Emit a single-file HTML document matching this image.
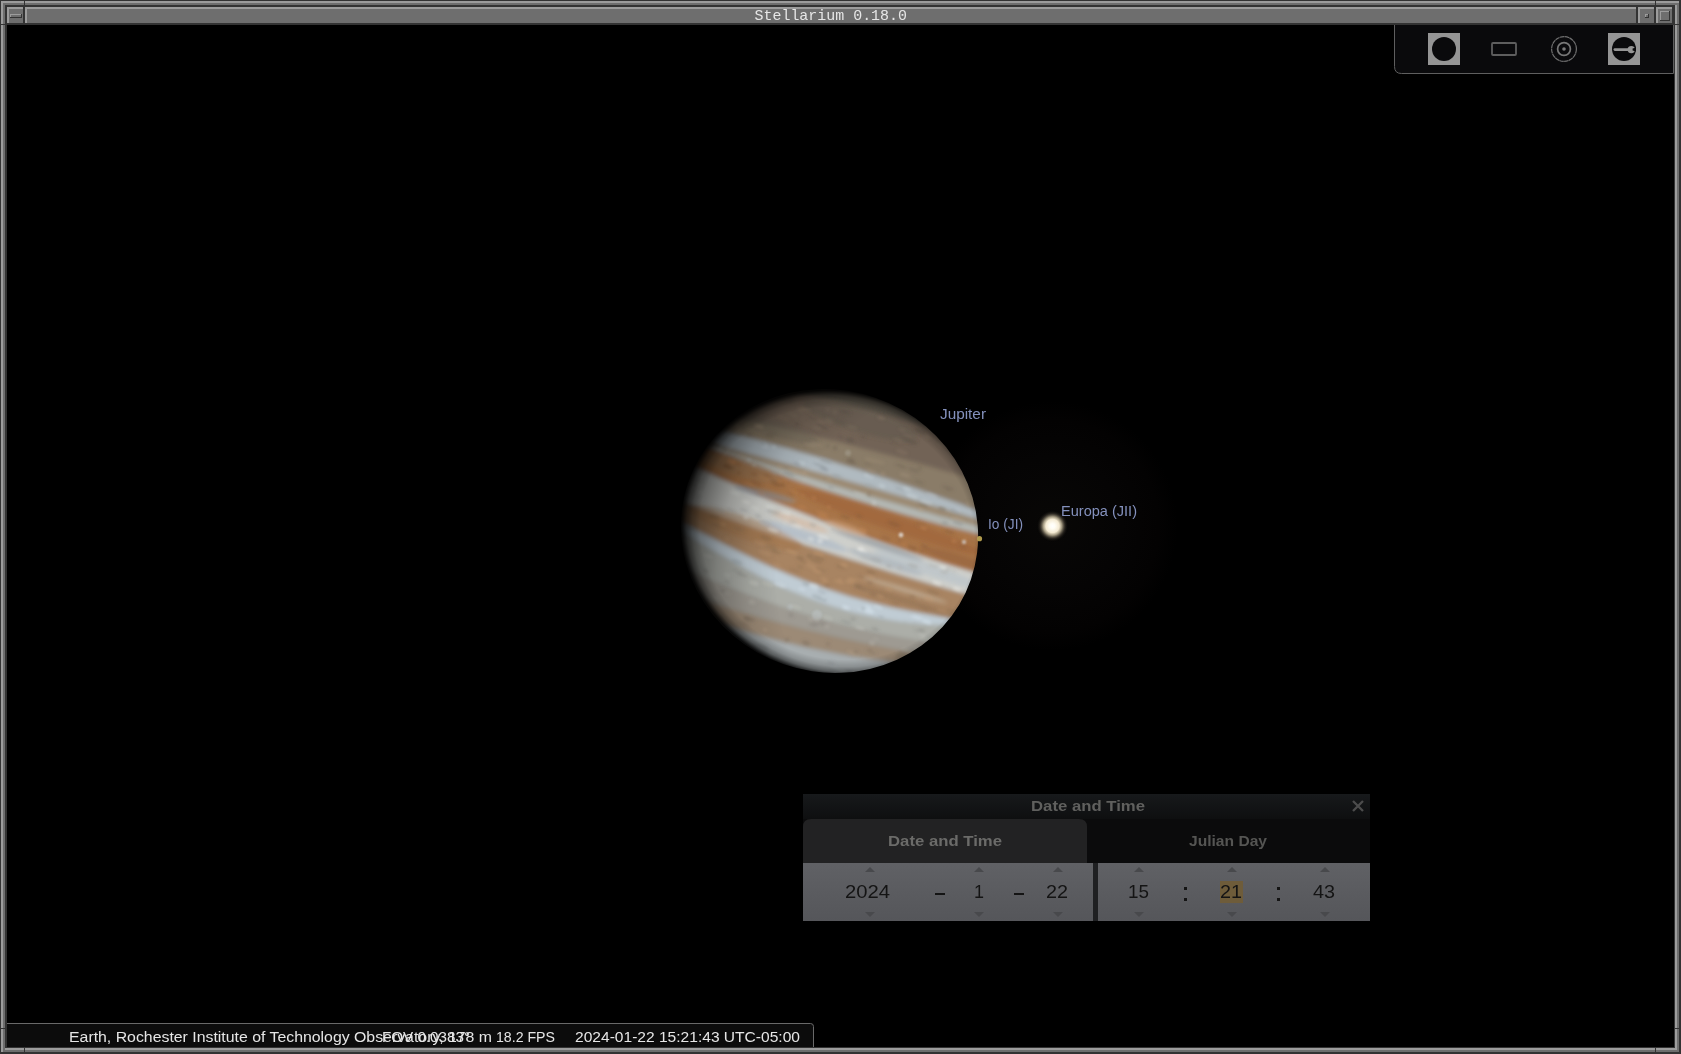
<!DOCTYPE html>
<html><head><meta charset="utf-8"><title>Stellarium</title>
<style>
html,body{margin:0;padding:0;background:#000;overflow:hidden;}
svg{display:block;will-change:transform;}
text{font-family:"Liberation Sans",sans-serif;}
.mono{font-family:"Liberation Mono",monospace;}
</style></head>
<body>
<svg width="1681" height="1054" viewBox="0 0 1681 1054">
<defs>
  <linearGradient id="dlgTitle" x1="0" y1="0" x2="0" y2="1">
    <stop offset="0" stop-color="#17191b"/><stop offset="1" stop-color="#0e0f10"/>
  </linearGradient>
  <linearGradient id="spin" x1="0" y1="0" x2="0" y2="1">
    <stop offset="0" stop-color="#606165"/><stop offset="1" stop-color="#55565a"/>
  </linearGradient>
</defs>
<!-- ===== window frame ===== -->
<g id="frame" shape-rendering="crispEdges">
  <rect x="0" y="0" width="1681" height="1054" fill="#333"/>
  <rect x="1" y="1" width="1678" height="2" fill="#9c9c9c"/>
  <rect x="1" y="1" width="2" height="1051" fill="#9c9c9c"/>
  <rect x="3" y="3" width="1674" height="2" fill="#6e6e6e"/>
  <rect x="3" y="3" width="2" height="1047" fill="#6e6e6e"/>
  <rect x="1677" y="3" width="2" height="1049" fill="#6e6e6e"/>
  <rect x="3" y="1050" width="1676" height="2" fill="#6e6e6e"/>
  <rect x="1675" y="5" width="2" height="1045" fill="#9c9c9c"/>
  <rect x="5" y="1048" width="1672" height="2" fill="#9c9c9c"/>
  <!-- corner splits -->
  <rect x="24" y="0" width="1" height="7" fill="#333"/>
  <rect x="1655" y="0" width="1" height="7" fill="#333"/>
  <rect x="24" y="1047" width="1" height="7" fill="#333"/>
  <rect x="1655" y="1047" width="1" height="7" fill="#333"/>
  <rect x="0" y="24" width="7" height="1" fill="#333"/>
  <rect x="1674" y="24" width="7" height="1" fill="#333"/>
  <rect x="0" y="1028" width="7" height="1" fill="#333"/>
  <rect x="1674" y="1028" width="7" height="1" fill="#333"/>
  <!-- title bar: menu button -->
  <rect x="7" y="7" width="18" height="18" fill="#333"/>
  <rect x="7" y="7" width="16" height="16" fill="#9c9c9c"/>
  <rect x="9" y="9" width="14" height="14" fill="#6e6e6e"/>
  <rect x="10" y="14" width="12" height="4" fill="#333"/>
  <rect x="10" y="14" width="11" height="3" fill="#9c9c9c"/>
  <rect x="11" y="15" width="10" height="2" fill="#6e6e6e"/>
  <!-- title region -->
  <rect x="25" y="7" width="1613" height="18" fill="#333"/>
  <rect x="25" y="7" width="1611" height="16" fill="#9c9c9c"/>
  <rect x="27" y="9" width="1609" height="14" fill="#6e6e6e"/>
  <!-- iconify -->
  <rect x="1638" y="7" width="18" height="18" fill="#333"/>
  <rect x="1638" y="7" width="16" height="16" fill="#9c9c9c"/>
  <rect x="1640" y="9" width="14" height="14" fill="#6e6e6e"/>
  <rect x="1645" y="14" width="4" height="4" fill="#333"/>
  <rect x="1645" y="14" width="3" height="3" fill="#9c9c9c"/>
  <rect x="1646" y="15" width="2" height="2" fill="#6e6e6e"/>
  <!-- maximize -->
  <rect x="1656" y="7" width="18" height="18" fill="#333"/>
  <rect x="1656" y="7" width="16" height="16" fill="#9c9c9c"/>
  <rect x="1658" y="9" width="14" height="14" fill="#6e6e6e"/>
  <rect x="1660" y="11" width="10" height="10" fill="#333"/>
  <rect x="1660" y="11" width="9" height="9" fill="#9c9c9c"/>
  <rect x="1661" y="12" width="8" height="8" fill="#6e6e6e"/>
  <!-- content -->
  <rect x="7" y="25" width="1667" height="1022" fill="#000"/>
</g>
<text class="mono" x="754.5" y="20" font-size="15" fill="#e6e6e6" textLength="152.5" lengthAdjust="spacingAndGlyphs">Stellarium 0.18.0</text>

<!-- ===== JUPITER ===== -->
<g id="jupiter">
<defs>
<mask id="jclip" maskUnits="userSpaceOnUse" x="600" y="350" width="450" height="380"><ellipse cx="829.5" cy="531.0" rx="149.5" ry="141.0" transform="rotate(19.0 829.5 531.0)" fill="#fff"/></mask>
<filter id="jblur" x="-10%" y="-10%" width="120%" height="120%"><feGaussianBlur stdDeviation="2.2"/></filter>
<filter id="jblur3" x="-10%" y="-10%" width="120%" height="120%"><feGaussianBlur stdDeviation="1.6"/></filter>
<filter id="jblur2" x="-10%" y="-10%" width="120%" height="120%"><feGaussianBlur stdDeviation="1.2"/></filter>
<radialGradient id="jshade" gradientUnits="userSpaceOnUse" cx="837.06" cy="533.60" r="157.50" gradientTransform="translate(837.06 533.60) rotate(19.00) scale(1 0.8984) translate(-837.06 -533.60)">
<stop offset="0.000" stop-color="#000" stop-opacity="0.00"/>
<stop offset="0.880" stop-color="#000" stop-opacity="0.00"/>
<stop offset="0.930" stop-color="#000" stop-opacity="0.18"/>
<stop offset="0.965" stop-color="#000" stop-opacity="0.45"/>
<stop offset="0.990" stop-color="#000" stop-opacity="0.80"/>
<stop offset="1.000" stop-color="#000" stop-opacity="0.92"/>
</radialGradient>
<radialGradient id="jphase" gradientUnits="userSpaceOnUse" cx="971.33" cy="579.84" r="299.50" gradientTransform="translate(971.33 579.84) rotate(19.00) scale(1 1.0000) translate(-971.33 -579.84)">
<stop offset="0.000" stop-color="#000" stop-opacity="0.00"/>
<stop offset="0.650" stop-color="#000" stop-opacity="0.00"/>
<stop offset="0.750" stop-color="#000" stop-opacity="0.10"/>
<stop offset="0.850" stop-color="#000" stop-opacity="0.28"/>
<stop offset="0.920" stop-color="#000" stop-opacity="0.48"/>
<stop offset="0.970" stop-color="#000" stop-opacity="0.65"/>
<stop offset="1.000" stop-color="#000" stop-opacity="0.75"/>
</radialGradient>
<radialGradient id="eurHalo" cx="1052.5" cy="526" r="125" gradientUnits="userSpaceOnUse"><stop offset="0" stop-color="#080706"/><stop offset="0.55" stop-color="#050404"/><stop offset="0.85" stop-color="#030202"/><stop offset="1" stop-color="#000"/></radialGradient>
<radialGradient id="eurGlow" cx="1052.5" cy="526" r="16" gradientUnits="userSpaceOnUse"><stop offset="0" stop-color="#ffffff"/><stop offset="0.16" stop-color="#fffdf4"/><stop offset="0.42" stop-color="#f4ead2"/><stop offset="0.58" stop-color="#b0a68c" stop-opacity="0.92"/><stop offset="0.78" stop-color="#403a30" stop-opacity="0.6"/><stop offset="1" stop-color="#000" stop-opacity="0"/></radialGradient>
</defs>
<circle cx="1052.5" cy="526" r="125" fill="url(#eurHalo)"/>
<g mask="url(#jclip)"><g>
<rect x="670" y="380" width="320" height="300" fill="#5a544a"/>
<g filter="url(#jblur)">
<path d="M660.0,357.3 L670.0,359.7 L680.0,362.2 L690.0,364.6 L700.0,367.1 L710.0,369.5 L720.0,372.0 L730.0,374.5 L740.0,376.9 L750.0,379.4 L760.0,382.0 L770.0,384.5 L780.0,387.0 L790.0,389.6 L800.0,392.2 L810.0,394.8 L820.0,397.4 L830.0,400.0 L840.0,402.6 L850.0,405.3 L860.0,408.0 L870.0,410.7 L880.0,413.4 L890.0,416.1 L900.0,418.9 L910.0,421.6 L920.0,424.4 L930.0,427.2 L940.0,430.0 L950.0,432.8 L960.0,435.6 L970.0,438.5 L980.0,441.3 L990.0,444.1 L1000.0,446.9 L1000.0,486.7 L990.0,483.8 L980.0,480.9 L970.0,478.0 L960.0,475.1 L950.0,472.2 L940.0,469.4 L930.0,466.6 L920.0,463.8 L910.0,461.0 L900.0,458.3 L890.0,455.6 L880.0,452.9 L870.0,450.3 L860.0,447.7 L850.0,445.1 L840.0,442.5 L830.0,440.0 L820.0,437.5 L810.0,435.0 L800.0,432.6 L790.0,430.2 L780.0,427.8 L770.0,425.4 L760.0,423.1 L750.0,420.8 L740.0,418.5 L730.0,416.2 L720.0,414.0 L710.0,411.8 L700.0,409.6 L690.0,407.4 L680.0,405.2 L670.0,403.0 L660.0,400.7Z" fill="#726456"/>
<path d="M660.0,400.7 L670.0,403.0 L680.0,405.2 L690.0,407.4 L700.0,409.6 L710.0,411.8 L720.0,414.0 L730.0,416.2 L740.0,418.5 L750.0,420.8 L760.0,423.1 L770.0,425.4 L780.0,427.8 L790.0,430.2 L800.0,432.6 L810.0,435.0 L820.0,437.5 L830.0,440.0 L840.0,442.5 L850.0,445.1 L860.0,447.7 L870.0,450.3 L880.0,452.9 L890.0,455.6 L900.0,458.3 L910.0,461.0 L920.0,463.8 L930.0,466.6 L940.0,469.4 L950.0,472.2 L960.0,475.1 L970.0,478.0 L980.0,480.9 L990.0,483.8 L1000.0,486.7 L1000.0,518.8 L990.0,515.2 L980.0,511.5 L970.0,507.8 L960.0,504.1 L950.0,500.5 L940.0,497.0 L930.0,493.4 L920.0,490.0 L910.0,486.5 L900.0,483.2 L890.0,479.8 L880.0,476.5 L870.0,473.3 L860.0,470.1 L850.0,467.0 L840.0,463.9 L830.0,460.8 L820.0,457.8 L810.0,454.8 L800.0,451.9 L790.0,449.0 L780.0,446.2 L770.0,443.4 L760.0,440.7 L750.0,438.0 L740.0,435.4 L730.0,432.8 L720.0,430.3 L710.0,427.7 L700.0,425.2 L690.0,422.7 L680.0,420.2 L670.0,417.7 L660.0,415.2Z" fill="#8a7c68"/>
<path d="M660.0,415.2 L670.0,417.7 L680.0,420.2 L690.0,422.7 L700.0,425.2 L710.0,427.7 L720.0,430.3 L730.0,432.8 L740.0,435.4 L750.0,438.0 L760.0,440.7 L770.0,443.4 L780.0,446.2 L790.0,449.0 L800.0,451.9 L810.0,454.8 L820.0,457.8 L830.0,460.8 L840.0,463.9 L850.0,467.0 L860.0,470.1 L870.0,473.3 L880.0,476.5 L890.0,479.8 L900.0,483.2 L910.0,486.5 L920.0,490.0 L930.0,493.4 L940.0,497.0 L950.0,500.5 L960.0,504.1 L970.0,507.8 L980.0,511.5 L990.0,515.2 L1000.0,518.8 L1000.0,526.1 L990.0,523.1 L980.0,520.0 L970.0,517.0 L960.0,514.0 L950.0,511.0 L940.0,508.0 L930.0,505.0 L920.0,502.0 L910.0,499.1 L900.0,496.1 L890.0,493.2 L880.0,490.3 L870.0,487.4 L860.0,484.5 L850.0,481.7 L840.0,478.8 L830.0,476.0 L820.0,473.2 L810.0,470.4 L800.0,467.6 L790.0,464.8 L780.0,462.1 L770.0,459.3 L760.0,456.6 L750.0,453.9 L740.0,451.2 L730.0,448.5 L720.0,445.8 L710.0,443.1 L700.0,440.5 L690.0,437.8 L680.0,435.2 L670.0,432.5 L660.0,429.8Z" fill="#b0bac0"/>
<path d="M660.0,429.8 L670.0,432.5 L680.0,435.2 L690.0,437.8 L700.0,440.5 L710.0,443.1 L720.0,445.8 L730.0,448.5 L740.0,451.2 L750.0,453.9 L760.0,456.6 L770.0,459.3 L780.0,462.1 L790.0,464.8 L800.0,467.6 L810.0,470.4 L820.0,473.2 L830.0,476.0 L840.0,478.8 L850.0,481.7 L860.0,484.5 L870.0,487.4 L880.0,490.3 L890.0,493.2 L900.0,496.1 L910.0,499.1 L920.0,502.0 L930.0,505.0 L940.0,508.0 L950.0,511.0 L960.0,514.0 L970.0,517.0 L980.0,520.0 L990.0,523.1 L1000.0,526.1 L1000.0,532.0 L990.0,529.4 L980.0,526.7 L970.0,524.0 L960.0,521.3 L950.0,518.6 L940.0,515.9 L930.0,513.1 L920.0,510.3 L910.0,507.5 L900.0,504.6 L890.0,501.8 L880.0,498.9 L870.0,495.9 L860.0,493.0 L850.0,490.0 L840.0,487.0 L830.0,484.0 L820.0,480.9 L810.0,477.9 L800.0,474.8 L790.0,471.6 L780.0,468.5 L770.0,465.3 L760.0,462.1 L750.0,458.9 L740.0,455.6 L730.0,452.3 L720.0,449.0 L710.0,445.7 L700.0,442.3 L690.0,439.0 L680.0,435.7 L670.0,432.3 L660.0,429.0Z" fill="#9c8a72"/>
<path d="M660.0,429.0 L670.0,432.3 L680.0,435.7 L690.0,439.0 L700.0,442.3 L710.0,445.7 L720.0,449.0 L730.0,452.3 L740.0,455.6 L750.0,458.9 L760.0,462.1 L770.0,465.3 L780.0,468.5 L790.0,471.6 L800.0,474.8 L810.0,477.9 L820.0,480.9 L830.0,484.0 L840.0,487.0 L850.0,490.0 L860.0,493.0 L870.0,495.9 L880.0,498.9 L890.0,501.8 L900.0,504.6 L910.0,507.5 L920.0,510.3 L930.0,513.1 L940.0,515.9 L950.0,518.6 L960.0,521.3 L970.0,524.0 L980.0,526.7 L990.0,529.4 L1000.0,532.0 L1000.0,539.3 L990.0,536.9 L980.0,534.4 L970.0,532.0 L960.0,529.5 L950.0,527.0 L940.0,524.4 L930.0,521.8 L920.0,519.1 L910.0,516.3 L900.0,513.5 L890.0,510.6 L880.0,507.7 L870.0,504.6 L860.0,501.6 L850.0,498.4 L840.0,495.3 L830.0,492.0 L820.0,488.7 L810.0,485.3 L800.0,481.9 L790.0,478.4 L780.0,474.8 L770.0,471.2 L760.0,467.5 L750.0,463.8 L740.0,460.0 L730.0,456.1 L720.0,452.2 L710.0,448.2 L700.0,444.2 L690.0,440.3 L680.0,436.3 L670.0,432.3 L660.0,428.4Z" fill="#b4b8b4"/>
<path d="M660.0,428.4 L670.0,432.3 L680.0,436.3 L690.0,440.3 L700.0,444.2 L710.0,448.2 L720.0,452.2 L730.0,456.1 L740.0,460.0 L750.0,463.8 L760.0,467.5 L770.0,471.2 L780.0,474.8 L790.0,478.4 L800.0,481.9 L810.0,485.3 L820.0,488.7 L830.0,492.0 L840.0,495.3 L850.0,498.4 L860.0,501.6 L870.0,504.6 L880.0,507.7 L890.0,510.6 L900.0,513.5 L910.0,516.3 L920.0,519.1 L930.0,521.8 L940.0,524.4 L950.0,527.0 L960.0,529.5 L970.0,532.0 L980.0,534.4 L990.0,536.9 L1000.0,539.3 L1000.0,579.7 L990.0,576.8 L980.0,573.9 L970.0,571.0 L960.0,568.1 L950.0,565.0 L940.0,562.0 L930.0,558.8 L920.0,555.6 L910.0,552.4 L900.0,549.1 L890.0,545.7 L880.0,542.2 L870.0,538.7 L860.0,535.1 L850.0,531.5 L840.0,527.8 L830.0,524.0 L820.0,520.2 L810.0,516.3 L800.0,512.3 L790.0,508.3 L780.0,504.2 L770.0,500.1 L760.0,495.8 L750.0,491.6 L740.0,487.2 L730.0,482.8 L720.0,478.4 L710.0,473.8 L700.0,469.3 L690.0,464.8 L680.0,460.3 L670.0,455.8 L660.0,451.2Z" fill="#a87448"/>
<path d="M660.0,451.2 L670.0,455.8 L680.0,460.3 L690.0,464.8 L700.0,469.3 L710.0,473.8 L720.0,478.4 L730.0,482.8 L740.0,487.2 L750.0,491.6 L760.0,495.8 L770.0,500.1 L780.0,504.2 L790.0,508.3 L800.0,512.3 L810.0,516.3 L820.0,520.2 L830.0,524.0 L840.0,527.8 L850.0,531.5 L860.0,535.1 L870.0,538.7 L880.0,542.2 L890.0,545.7 L900.0,549.1 L910.0,552.4 L920.0,555.6 L930.0,558.8 L940.0,562.0 L950.0,565.0 L960.0,568.1 L970.0,571.0 L980.0,573.9 L990.0,576.8 L1000.0,579.7 L1000.0,603.9 L990.0,601.1 L980.0,598.2 L970.0,595.4 L960.0,592.6 L950.0,589.7 L940.0,586.8 L930.0,583.9 L920.0,580.9 L910.0,577.9 L900.0,574.9 L890.0,571.9 L880.0,568.8 L870.0,565.7 L860.0,562.6 L850.0,559.4 L840.0,556.2 L830.0,553.0 L820.0,549.8 L810.0,546.5 L800.0,543.2 L790.0,539.9 L780.0,536.5 L770.0,533.1 L760.0,529.7 L750.0,526.2 L740.0,522.8 L730.0,519.3 L720.0,515.7 L710.0,512.2 L700.0,508.6 L690.0,505.0 L680.0,501.3 L670.0,497.7 L660.0,494.1Z" fill="#cfd0cc"/>
<path d="M660.0,494.1 L670.0,497.7 L680.0,501.3 L690.0,505.0 L700.0,508.6 L710.0,512.2 L720.0,515.7 L730.0,519.3 L740.0,522.8 L750.0,526.2 L760.0,529.7 L770.0,533.1 L780.0,536.5 L790.0,539.9 L800.0,543.2 L810.0,546.5 L820.0,549.8 L830.0,553.0 L840.0,556.2 L850.0,559.4 L860.0,562.6 L870.0,565.7 L880.0,568.8 L890.0,571.9 L900.0,574.9 L910.0,577.9 L920.0,580.9 L930.0,583.9 L940.0,586.8 L950.0,589.7 L960.0,592.6 L970.0,595.4 L980.0,598.2 L990.0,601.1 L1000.0,603.9 L1000.0,626.3 L990.0,624.6 L980.0,622.9 L970.0,621.2 L960.0,619.6 L950.0,617.9 L940.0,616.2 L930.0,614.5 L920.0,612.8 L910.0,611.0 L900.0,609.0 L890.0,606.9 L880.0,604.5 L870.0,602.0 L860.0,599.3 L850.0,596.4 L840.0,593.3 L830.0,590.0 L820.0,586.5 L810.0,582.9 L800.0,579.0 L790.0,575.0 L780.0,570.8 L770.0,566.4 L760.0,561.8 L750.0,557.0 L740.0,552.0 L730.0,546.9 L720.0,541.9 L710.0,536.8 L700.0,531.7 L690.0,526.7 L680.0,521.6 L670.0,516.5 L660.0,511.5Z" fill="#a88462"/>
<path d="M660.0,511.5 L670.0,516.5 L680.0,521.6 L690.0,526.7 L700.0,531.7 L710.0,536.8 L720.0,541.9 L730.0,546.9 L740.0,552.0 L750.0,557.0 L760.0,561.8 L770.0,566.4 L780.0,570.8 L790.0,575.0 L800.0,579.0 L810.0,582.9 L820.0,586.5 L830.0,590.0 L840.0,593.3 L850.0,596.4 L860.0,599.3 L870.0,602.0 L880.0,604.5 L890.0,606.9 L900.0,609.0 L910.0,611.0 L920.0,612.8 L930.0,614.5 L940.0,616.2 L950.0,617.9 L960.0,619.6 L970.0,621.2 L980.0,622.9 L990.0,624.6 L1000.0,626.3 L1000.0,630.2 L990.0,629.4 L980.0,628.7 L970.0,627.9 L960.0,627.1 L950.0,626.3 L940.0,625.6 L930.0,624.8 L920.0,624.0 L910.0,623.1 L900.0,621.9 L890.0,620.4 L880.0,618.7 L870.0,616.7 L860.0,614.4 L850.0,611.9 L840.0,609.1 L830.0,606.0 L820.0,602.6 L810.0,599.0 L800.0,595.1 L790.0,590.9 L780.0,586.5 L770.0,581.8 L760.0,576.8 L750.0,571.5 L740.0,566.0 L730.0,560.3 L720.0,554.7 L710.0,549.0 L700.0,543.3 L690.0,537.7 L680.0,532.0 L670.0,526.3 L660.0,520.7Z" fill="#c0ccd4"/>
<path d="M660.0,520.7 L670.0,526.3 L680.0,532.0 L690.0,537.7 L700.0,543.3 L710.0,549.0 L720.0,554.7 L730.0,560.3 L740.0,566.0 L750.0,571.5 L760.0,576.8 L770.0,581.8 L780.0,586.5 L790.0,590.9 L800.0,595.1 L810.0,599.0 L820.0,602.6 L830.0,606.0 L840.0,609.1 L850.0,611.9 L860.0,614.4 L870.0,616.7 L880.0,618.7 L890.0,620.4 L900.0,621.9 L910.0,623.1 L920.0,624.0 L930.0,624.8 L940.0,625.6 L950.0,626.3 L960.0,627.1 L970.0,627.9 L980.0,628.7 L990.0,629.4 L1000.0,630.2 L1000.0,653.0 L990.0,651.5 L980.0,650.0 L970.0,648.5 L960.0,647.0 L950.0,645.5 L940.0,644.0 L930.0,642.5 L920.0,641.0 L910.0,639.4 L900.0,637.7 L890.0,635.9 L880.0,633.9 L870.0,631.8 L860.0,629.6 L850.0,627.2 L840.0,624.7 L830.0,622.0 L820.0,619.2 L810.0,616.3 L800.0,613.2 L790.0,610.0 L780.0,606.7 L770.0,603.2 L760.0,599.6 L750.0,595.9 L740.0,592.0 L730.0,588.1 L720.0,584.1 L710.0,580.2 L700.0,576.2 L690.0,572.3 L680.0,568.3 L670.0,564.4 L660.0,560.4Z" fill="#acaea8"/>
<path d="M660.0,560.4 L670.0,564.4 L680.0,568.3 L690.0,572.3 L700.0,576.2 L710.0,580.2 L720.0,584.1 L730.0,588.1 L740.0,592.0 L750.0,595.9 L760.0,599.6 L770.0,603.2 L780.0,606.7 L790.0,610.0 L800.0,613.2 L810.0,616.3 L820.0,619.2 L830.0,622.0 L840.0,624.7 L850.0,627.2 L860.0,629.6 L870.0,631.8 L880.0,633.9 L890.0,635.9 L900.0,637.7 L910.0,639.4 L920.0,641.0 L930.0,642.5 L940.0,644.0 L950.0,645.5 L960.0,647.0 L970.0,648.5 L980.0,650.0 L990.0,651.5 L1000.0,653.0 L1000.0,667.3 L990.0,665.7 L980.0,664.0 L970.0,662.3 L960.0,660.7 L950.0,659.0 L940.0,657.3 L930.0,655.7 L920.0,654.0 L910.0,652.3 L900.0,650.5 L890.0,648.7 L880.0,646.7 L870.0,644.7 L860.0,642.7 L850.0,640.5 L840.0,638.3 L830.0,636.0 L820.0,633.6 L810.0,631.2 L800.0,628.7 L790.0,626.1 L780.0,623.4 L770.0,620.7 L760.0,617.9 L750.0,615.0 L740.0,612.0 L730.0,609.0 L720.0,606.0 L710.0,603.0 L700.0,600.0 L690.0,597.0 L680.0,594.0 L670.0,591.0 L660.0,588.0Z" fill="#9e9a92"/>
<path d="M660.0,588.0 L670.0,591.0 L680.0,594.0 L690.0,597.0 L700.0,600.0 L710.0,603.0 L720.0,606.0 L730.0,609.0 L740.0,612.0 L750.0,615.0 L760.0,617.9 L770.0,620.7 L780.0,623.4 L790.0,626.1 L800.0,628.7 L810.0,631.2 L820.0,633.6 L830.0,636.0 L840.0,638.3 L850.0,640.5 L860.0,642.7 L870.0,644.7 L880.0,646.7 L890.0,648.7 L900.0,650.5 L910.0,652.3 L920.0,654.0 L930.0,655.7 L940.0,657.3 L950.0,659.0 L960.0,660.7 L970.0,662.3 L980.0,664.0 L990.0,665.7 L1000.0,667.3 L1000.0,672.6 L990.0,671.6 L980.0,670.7 L970.0,669.7 L960.0,668.8 L950.0,667.8 L940.0,666.9 L930.0,665.9 L920.0,665.0 L910.0,664.0 L900.0,662.9 L890.0,661.7 L880.0,660.3 L870.0,658.9 L860.0,657.3 L850.0,655.7 L840.0,653.9 L830.0,652.0 L820.0,650.0 L810.0,647.9 L800.0,645.7 L790.0,643.3 L780.0,640.9 L770.0,638.3 L760.0,635.7 L750.0,632.9 L740.0,630.0 L730.0,627.1 L720.0,624.1 L710.0,621.2 L700.0,618.2 L690.0,615.3 L680.0,612.3 L670.0,609.4 L660.0,606.4Z" fill="#9c8a76"/>
<path d="M660.0,606.4 L670.0,609.4 L680.0,612.3 L690.0,615.3 L700.0,618.2 L710.0,621.2 L720.0,624.1 L730.0,627.1 L740.0,630.0 L750.0,632.9 L760.0,635.7 L770.0,638.3 L780.0,640.9 L790.0,643.3 L800.0,645.7 L810.0,647.9 L820.0,650.0 L830.0,652.0 L840.0,653.9 L850.0,655.7 L860.0,657.3 L870.0,658.9 L880.0,660.3 L890.0,661.7 L900.0,662.9 L910.0,664.0 L920.0,665.0 L930.0,665.9 L940.0,666.9 L950.0,667.8 L960.0,668.8 L970.0,669.7 L980.0,670.7 L990.0,671.6 L1000.0,672.6 L1000.0,765.5 L990.0,764.5 L980.0,763.6 L970.0,762.7 L960.0,761.8 L950.0,760.9 L940.0,760.0 L930.0,759.0 L920.0,757.9 L910.0,756.5 L900.0,755.0 L890.0,753.4 L880.0,751.6 L870.0,749.6 L860.0,747.4 L850.0,745.1 L840.0,742.6 L830.0,740.0 L820.0,737.2 L810.0,734.2 L800.0,731.1 L790.0,727.8 L780.0,724.3 L770.0,720.7 L760.0,716.9 L750.0,712.9 L740.0,708.8 L730.0,704.5 L720.0,700.0 L710.0,695.5 L700.0,690.9 L690.0,686.4 L680.0,681.8 L670.0,677.3 L660.0,672.7Z" fill="#a8aeb0"/>
</g>
<g filter="url(#jblur)">
<ellipse cx="890.0" cy="522.0" rx="100.0" ry="8.0" transform="rotate(19.0 890.0 522.0)" fill="#985a30" fill-opacity="0.40"/>
<ellipse cx="960.0" cy="560.0" rx="40.0" ry="5.0" transform="rotate(17.0 960.0 560.0)" fill="#8a5a3a" fill-opacity="0.40"/>
<ellipse cx="878.0" cy="545.0" rx="48.0" ry="3.0" transform="rotate(19.0 878.0 545.0)" fill="#7a8490" fill-opacity="0.50"/>
<ellipse cx="930.0" cy="570.0" rx="60.0" ry="6.0" transform="rotate(19.0 930.0 570.0)" fill="#b0bcc8" fill-opacity="0.45"/>
<ellipse cx="800.0" cy="522.0" rx="30.0" ry="4.0" transform="rotate(19.0 800.0 522.0)" fill="#dca27a" fill-opacity="0.35"/>
<ellipse cx="742.0" cy="468.0" rx="40.0" ry="9.0" transform="rotate(17.0 742.0 468.0)" fill="#9c7e60" fill-opacity="0.45"/>
<ellipse cx="765.0" cy="494.0" rx="32.0" ry="3.5" transform="rotate(14.0 765.0 494.0)" fill="#8696a6" fill-opacity="0.55"/>
<ellipse cx="805.0" cy="536.0" rx="45.0" ry="5.0" transform="rotate(19.0 805.0 536.0)" fill="#a6b6c6" fill-opacity="0.60"/>
<ellipse cx="885.0" cy="562.0" rx="40.0" ry="4.0" transform="rotate(19.0 885.0 562.0)" fill="#a0acb6" fill-opacity="0.55"/>
<ellipse cx="846.0" cy="528.0" rx="22.0" ry="4.0" transform="rotate(19.0 846.0 528.0)" fill="#dcb490" fill-opacity="0.50"/>
<ellipse cx="745.0" cy="528.0" rx="60.0" ry="11.0" transform="rotate(19.0 745.0 528.0)" fill="#a27048" fill-opacity="0.45"/>
<ellipse cx="905.0" cy="590.0" rx="45.0" ry="2.5" transform="rotate(17.0 905.0 590.0)" fill="#cfc6b6" fill-opacity="0.50"/>
<ellipse cx="905.0" cy="601.0" rx="55.0" ry="3.0" transform="rotate(17.0 905.0 601.0)" fill="#8a6a50" fill-opacity="0.45"/>
<ellipse cx="860.0" cy="420.0" rx="60.0" ry="12.0" transform="rotate(17.0 860.0 420.0)" fill="#5e564c" fill-opacity="0.50"/>
<ellipse cx="780.0" cy="430.0" rx="40.0" ry="8.0" transform="rotate(17.0 780.0 430.0)" fill="#6a6054" fill-opacity="0.40"/>
</g>
<g filter="url(#jblur3)">
<ellipse cx="777" cy="395" rx="2.4" ry="1.8" transform="rotate(18 777 395)" fill="#584e43" fill-opacity="0.4"/>
<ellipse cx="790" cy="395" rx="2.2" ry="1.7" transform="rotate(18 790 395)" fill="#605549" fill-opacity="0.4"/>
<ellipse cx="701" cy="375" rx="2.3" ry="1.8" transform="rotate(18 701 375)" fill="#867665" fill-opacity="0.4"/>
<ellipse cx="964" cy="461" rx="4.9" ry="1.6" transform="rotate(18 964 461)" fill="#584e43" fill-opacity="0.4"/>
<ellipse cx="973" cy="445" rx="3.4" ry="1.2" transform="rotate(18 973 445)" fill="#605549" fill-opacity="0.4"/>
<ellipse cx="715" cy="385" rx="2.5" ry="1.9" transform="rotate(18 715 385)" fill="#605549" fill-opacity="0.4"/>
<ellipse cx="736" cy="383" rx="4.8" ry="1.9" transform="rotate(18 736 383)" fill="#584e43" fill-opacity="0.4"/>
<ellipse cx="829" cy="421" rx="4.3" ry="2.4" transform="rotate(18 829 421)" fill="#7f7060" fill-opacity="0.4"/>
<ellipse cx="788" cy="401" rx="5.5" ry="1.4" transform="rotate(18 788 401)" fill="#605549" fill-opacity="0.4"/>
<ellipse cx="852" cy="427" rx="5.6" ry="1.4" transform="rotate(18 852 427)" fill="#7f7060" fill-opacity="0.4"/>
<ellipse cx="974" cy="447" rx="2.8" ry="1.5" transform="rotate(18 974 447)" fill="#867665" fill-opacity="0.4"/>
<ellipse cx="960" cy="453" rx="5.8" ry="1.9" transform="rotate(18 960 453)" fill="#584e43" fill-opacity="0.4"/>
<ellipse cx="943" cy="445" rx="5.0" ry="1.9" transform="rotate(18 943 445)" fill="#7f7060" fill-opacity="0.4"/>
<ellipse cx="817" cy="428" rx="4.4" ry="2.0" transform="rotate(18 817 428)" fill="#7f7060" fill-opacity="0.4"/>
<ellipse cx="698" cy="395" rx="3.4" ry="1.6" transform="rotate(18 698 395)" fill="#867665" fill-opacity="0.4"/>
<ellipse cx="881" cy="418" rx="3.8" ry="1.9" transform="rotate(18 881 418)" fill="#867665" fill-opacity="0.4"/>
<ellipse cx="828" cy="410" rx="2.6" ry="1.4" transform="rotate(18 828 410)" fill="#7f7060" fill-opacity="0.4"/>
<ellipse cx="797" cy="424" rx="2.8" ry="1.6" transform="rotate(18 797 424)" fill="#584e43" fill-opacity="0.4"/>
<ellipse cx="763" cy="391" rx="6.3" ry="1.4" transform="rotate(18 763 391)" fill="#867665" fill-opacity="0.4"/>
<ellipse cx="805" cy="409" rx="6.8" ry="1.2" transform="rotate(18 805 409)" fill="#867665" fill-opacity="0.4"/>
<ellipse cx="733" cy="387" rx="2.1" ry="2.2" transform="rotate(18 733 387)" fill="#605549" fill-opacity="0.4"/>
<ellipse cx="735" cy="389" rx="4.1" ry="1.6" transform="rotate(18 735 389)" fill="#605549" fill-opacity="0.4"/>
<ellipse cx="850" cy="440" rx="4.3" ry="2.3" transform="rotate(18 850 440)" fill="#584e43" fill-opacity="0.4"/>
<ellipse cx="966" cy="463" rx="4.0" ry="1.6" transform="rotate(18 966 463)" fill="#867665" fill-opacity="0.4"/>
<ellipse cx="824" cy="415" rx="2.3" ry="1.3" transform="rotate(18 824 415)" fill="#605549" fill-opacity="0.4"/>
<ellipse cx="729" cy="390" rx="2.5" ry="1.9" transform="rotate(18 729 390)" fill="#584e43" fill-opacity="0.4"/>
<ellipse cx="841" cy="437" rx="2.4" ry="1.3" transform="rotate(18 841 437)" fill="#584e43" fill-opacity="0.4"/>
<ellipse cx="793" cy="415" rx="5.0" ry="1.7" transform="rotate(18 793 415)" fill="#7f7060" fill-opacity="0.4"/>
<ellipse cx="715" cy="391" rx="4.4" ry="1.5" transform="rotate(18 715 391)" fill="#867665" fill-opacity="0.4"/>
<ellipse cx="723" cy="402" rx="4.4" ry="2.0" transform="rotate(18 723 402)" fill="#7f7060" fill-opacity="0.4"/>
<ellipse cx="835" cy="412" rx="2.7" ry="1.8" transform="rotate(18 835 412)" fill="#7f7060" fill-opacity="0.4"/>
<ellipse cx="688" cy="387" rx="5.5" ry="1.4" transform="rotate(18 688 387)" fill="#584e43" fill-opacity="0.4"/>
<ellipse cx="790" cy="399" rx="4.7" ry="2.2" transform="rotate(18 790 399)" fill="#605549" fill-opacity="0.4"/>
<ellipse cx="779" cy="398" rx="6.0" ry="2.2" transform="rotate(18 779 398)" fill="#605549" fill-opacity="0.4"/>
<ellipse cx="902" cy="430" rx="3.8" ry="1.0" transform="rotate(18 902 430)" fill="#867665" fill-opacity="0.4"/>
<ellipse cx="688" cy="378" rx="3.0" ry="1.9" transform="rotate(18 688 378)" fill="#7f7060" fill-opacity="0.4"/>
<ellipse cx="783" cy="418" rx="6.8" ry="1.5" transform="rotate(18 783 418)" fill="#7f7060" fill-opacity="0.4"/>
<ellipse cx="746" cy="390" rx="3.7" ry="1.7" transform="rotate(18 746 390)" fill="#605549" fill-opacity="0.4"/>
<ellipse cx="976" cy="463" rx="4.4" ry="2.0" transform="rotate(18 976 463)" fill="#584e43" fill-opacity="0.4"/>
<ellipse cx="920" cy="431" rx="6.5" ry="2.2" transform="rotate(18 920 431)" fill="#584e43" fill-opacity="0.4"/>
<ellipse cx="905" cy="439" rx="4.2" ry="2.0" transform="rotate(18 905 439)" fill="#605549" fill-opacity="0.4"/>
<ellipse cx="706" cy="405" rx="4.3" ry="2.1" transform="rotate(18 706 405)" fill="#867665" fill-opacity="0.4"/>
<ellipse cx="705" cy="378" rx="2.1" ry="1.9" transform="rotate(18 705 378)" fill="#605549" fill-opacity="0.4"/>
<ellipse cx="820" cy="422" rx="5.3" ry="1.5" transform="rotate(18 820 422)" fill="#867665" fill-opacity="0.4"/>
<ellipse cx="845" cy="412" rx="6.0" ry="2.1" transform="rotate(18 845 412)" fill="#584e43" fill-opacity="0.4"/>
<ellipse cx="711" cy="399" rx="4.2" ry="2.3" transform="rotate(18 711 399)" fill="#605549" fill-opacity="0.4"/>
<ellipse cx="928" cy="437" rx="3.1" ry="1.8" transform="rotate(18 928 437)" fill="#7f7060" fill-opacity="0.4"/>
<ellipse cx="909" cy="436" rx="6.2" ry="1.1" transform="rotate(18 909 436)" fill="#867665" fill-opacity="0.4"/>
<ellipse cx="902" cy="452" rx="6.1" ry="2.3" transform="rotate(18 902 452)" fill="#867665" fill-opacity="0.4"/>
<ellipse cx="719" cy="381" rx="6.4" ry="2.2" transform="rotate(18 719 381)" fill="#584e43" fill-opacity="0.4"/>
<ellipse cx="863" cy="437" rx="2.9" ry="1.7" transform="rotate(18 863 437)" fill="#605549" fill-opacity="0.4"/>
<ellipse cx="898" cy="440" rx="5.4" ry="1.8" transform="rotate(18 898 440)" fill="#7f7060" fill-opacity="0.4"/>
<ellipse cx="825" cy="428" rx="3.2" ry="1.4" transform="rotate(18 825 428)" fill="#584e43" fill-opacity="0.4"/>
<ellipse cx="912" cy="442" rx="5.8" ry="2.4" transform="rotate(18 912 442)" fill="#584e43" fill-opacity="0.4"/>
<ellipse cx="813" cy="419" rx="5.5" ry="1.7" transform="rotate(18 813 419)" fill="#605549" fill-opacity="0.4"/>
<ellipse cx="840" cy="422" rx="5.5" ry="2.3" transform="rotate(18 840 422)" fill="#605549" fill-opacity="0.4"/>
<ellipse cx="963" cy="449" rx="6.2" ry="1.2" transform="rotate(18 963 449)" fill="#605549" fill-opacity="0.4"/>
<ellipse cx="716" cy="390" rx="5.4" ry="1.6" transform="rotate(18 716 390)" fill="#584e43" fill-opacity="0.4"/>
<ellipse cx="744" cy="392" rx="6.5" ry="1.2" transform="rotate(18 744 392)" fill="#584e43" fill-opacity="0.4"/>
<ellipse cx="895" cy="442" rx="3.3" ry="1.2" transform="rotate(18 895 442)" fill="#605549" fill-opacity="0.4"/>
<ellipse cx="820" cy="425" rx="4.0" ry="1.7" transform="rotate(18 820 425)" fill="#584e43" fill-opacity="0.4"/>
<ellipse cx="977" cy="471" rx="5.5" ry="2.5" transform="rotate(18 977 471)" fill="#605549" fill-opacity="0.4"/>
<ellipse cx="801" cy="410" rx="3.6" ry="2.1" transform="rotate(18 801 410)" fill="#7f7060" fill-opacity="0.4"/>
<ellipse cx="686" cy="387" rx="5.5" ry="1.6" transform="rotate(18 686 387)" fill="#867665" fill-opacity="0.4"/>
<ellipse cx="835" cy="448" rx="2.6" ry="2.4" transform="rotate(18 835 448)" fill="#6b6051" fill-opacity="0.4"/>
<ellipse cx="749" cy="434" rx="3.3" ry="1.1" transform="rotate(18 749 434)" fill="#6b6051" fill-opacity="0.4"/>
<ellipse cx="914" cy="470" rx="6.1" ry="2.3" transform="rotate(18 914 470)" fill="#756958" fill-opacity="0.4"/>
<ellipse cx="883" cy="474" rx="2.7" ry="2.4" transform="rotate(18 883 474)" fill="#a2927a" fill-opacity="0.4"/>
<ellipse cx="851" cy="460" rx="3.4" ry="2.2" transform="rotate(18 851 460)" fill="#6b6051" fill-opacity="0.4"/>
<ellipse cx="735" cy="431" rx="6.7" ry="2.0" transform="rotate(18 735 431)" fill="#9a8a74" fill-opacity="0.4"/>
<ellipse cx="920" cy="468" rx="2.3" ry="2.3" transform="rotate(18 920 468)" fill="#756958" fill-opacity="0.4"/>
<ellipse cx="816" cy="444" rx="6.6" ry="1.4" transform="rotate(18 816 444)" fill="#a2927a" fill-opacity="0.4"/>
<ellipse cx="719" cy="422" rx="6.7" ry="2.5" transform="rotate(18 719 422)" fill="#756958" fill-opacity="0.4"/>
<ellipse cx="759" cy="427" rx="5.1" ry="1.8" transform="rotate(18 759 427)" fill="#9a8a74" fill-opacity="0.4"/>
<ellipse cx="742" cy="427" rx="3.4" ry="2.2" transform="rotate(18 742 427)" fill="#756958" fill-opacity="0.4"/>
<ellipse cx="978" cy="484" rx="5.7" ry="1.8" transform="rotate(18 978 484)" fill="#6b6051" fill-opacity="0.4"/>
<ellipse cx="737" cy="426" rx="2.5" ry="2.2" transform="rotate(18 737 426)" fill="#a2927a" fill-opacity="0.4"/>
<ellipse cx="810" cy="445" rx="6.9" ry="1.5" transform="rotate(18 810 445)" fill="#a2927a" fill-opacity="0.4"/>
<ellipse cx="745" cy="424" rx="6.2" ry="2.1" transform="rotate(18 745 424)" fill="#756958" fill-opacity="0.4"/>
<ellipse cx="871" cy="460" rx="6.9" ry="2.3" transform="rotate(18 871 460)" fill="#9a8a74" fill-opacity="0.4"/>
<ellipse cx="684" cy="415" rx="4.2" ry="1.1" transform="rotate(18 684 415)" fill="#9a8a74" fill-opacity="0.4"/>
<ellipse cx="880" cy="462" rx="5.0" ry="2.0" transform="rotate(18 880 462)" fill="#9a8a74" fill-opacity="0.4"/>
<ellipse cx="694" cy="412" rx="4.2" ry="1.4" transform="rotate(18 694 412)" fill="#9a8a74" fill-opacity="0.4"/>
<ellipse cx="969" cy="504" rx="3.2" ry="2.4" transform="rotate(18 969 504)" fill="#9a8a74" fill-opacity="0.4"/>
<ellipse cx="773" cy="433" rx="3.7" ry="1.1" transform="rotate(18 773 433)" fill="#6b6051" fill-opacity="0.4"/>
<ellipse cx="764" cy="435" rx="4.5" ry="1.0" transform="rotate(18 764 435)" fill="#756958" fill-opacity="0.4"/>
<ellipse cx="759" cy="426" rx="4.9" ry="1.6" transform="rotate(18 759 426)" fill="#a2927a" fill-opacity="0.4"/>
<ellipse cx="770" cy="436" rx="4.9" ry="1.8" transform="rotate(18 770 436)" fill="#6b6051" fill-opacity="0.4"/>
<ellipse cx="905" cy="475" rx="5.8" ry="2.1" transform="rotate(18 905 475)" fill="#a2927a" fill-opacity="0.4"/>
<ellipse cx="828" cy="446" rx="2.2" ry="2.3" transform="rotate(18 828 446)" fill="#756958" fill-opacity="0.4"/>
<ellipse cx="948" cy="488" rx="6.5" ry="2.1" transform="rotate(18 948 488)" fill="#756958" fill-opacity="0.4"/>
<ellipse cx="851" cy="462" rx="6.1" ry="1.9" transform="rotate(18 851 462)" fill="#6b6051" fill-opacity="0.4"/>
<ellipse cx="948" cy="490" rx="2.4" ry="1.1" transform="rotate(18 948 490)" fill="#756958" fill-opacity="0.4"/>
<ellipse cx="871" cy="471" rx="6.2" ry="1.8" transform="rotate(18 871 471)" fill="#a2927a" fill-opacity="0.4"/>
<ellipse cx="868" cy="464" rx="4.4" ry="1.0" transform="rotate(18 868 464)" fill="#756958" fill-opacity="0.4"/>
<ellipse cx="919" cy="482" rx="5.3" ry="1.1" transform="rotate(18 919 482)" fill="#6b6051" fill-opacity="0.4"/>
<ellipse cx="901" cy="466" rx="6.2" ry="1.4" transform="rotate(18 901 466)" fill="#6b6051" fill-opacity="0.4"/>
<ellipse cx="907" cy="489" rx="4.5" ry="1.6" transform="rotate(18 907 489)" fill="#cfdbe2" fill-opacity="0.4"/>
<ellipse cx="824" cy="469" rx="5.1" ry="2.0" transform="rotate(18 824 469)" fill="#899195" fill-opacity="0.4"/>
<ellipse cx="703" cy="429" rx="5.3" ry="2.0" transform="rotate(18 703 429)" fill="#c5d0d7" fill-opacity="0.4"/>
<ellipse cx="866" cy="475" rx="2.3" ry="1.4" transform="rotate(18 866 475)" fill="#cfdbe2" fill-opacity="0.4"/>
<ellipse cx="882" cy="486" rx="3.5" ry="1.8" transform="rotate(18 882 486)" fill="#cfdbe2" fill-opacity="0.4"/>
<ellipse cx="819" cy="465" rx="7.0" ry="1.8" transform="rotate(18 819 465)" fill="#899195" fill-opacity="0.4"/>
<ellipse cx="774" cy="447" rx="2.1" ry="1.7" transform="rotate(18 774 447)" fill="#cfdbe2" fill-opacity="0.4"/>
<ellipse cx="926" cy="502" rx="7.0" ry="1.6" transform="rotate(18 926 502)" fill="#cfdbe2" fill-opacity="0.4"/>
<ellipse cx="955" cy="511" rx="4.9" ry="1.2" transform="rotate(18 955 511)" fill="#899195" fill-opacity="0.4"/>
<ellipse cx="837" cy="476" rx="5.0" ry="1.9" transform="rotate(18 837 476)" fill="#959ea3" fill-opacity="0.4"/>
<ellipse cx="764" cy="445" rx="3.2" ry="2.3" transform="rotate(18 764 445)" fill="#c5d0d7" fill-opacity="0.4"/>
<ellipse cx="826" cy="461" rx="6.7" ry="2.0" transform="rotate(18 826 461)" fill="#899195" fill-opacity="0.4"/>
<ellipse cx="802" cy="463" rx="3.7" ry="1.5" transform="rotate(18 802 463)" fill="#cfdbe2" fill-opacity="0.4"/>
<ellipse cx="932" cy="495" rx="6.2" ry="1.2" transform="rotate(18 932 495)" fill="#c5d0d7" fill-opacity="0.4"/>
<ellipse cx="958" cy="510" rx="3.3" ry="1.1" transform="rotate(18 958 510)" fill="#c5d0d7" fill-opacity="0.4"/>
<ellipse cx="797" cy="464" rx="3.8" ry="1.6" transform="rotate(18 797 464)" fill="#899195" fill-opacity="0.4"/>
<ellipse cx="763" cy="444" rx="2.3" ry="2.0" transform="rotate(18 763 444)" fill="#899195" fill-opacity="0.4"/>
<ellipse cx="870" cy="477" rx="4.2" ry="1.5" transform="rotate(18 870 477)" fill="#c5d0d7" fill-opacity="0.4"/>
<ellipse cx="912" cy="496" rx="6.4" ry="2.2" transform="rotate(18 912 496)" fill="#cfdbe2" fill-opacity="0.4"/>
<ellipse cx="869" cy="485" rx="5.6" ry="1.1" transform="rotate(18 869 485)" fill="#959ea3" fill-opacity="0.4"/>
<ellipse cx="900" cy="489" rx="5.2" ry="1.4" transform="rotate(18 900 489)" fill="#959ea3" fill-opacity="0.4"/>
<ellipse cx="695" cy="437" rx="2.9" ry="1.6" transform="rotate(18 695 437)" fill="#959ea3" fill-opacity="0.4"/>
<ellipse cx="765" cy="447" rx="4.0" ry="1.4" transform="rotate(18 765 447)" fill="#c5d0d7" fill-opacity="0.4"/>
<ellipse cx="825" cy="469" rx="2.8" ry="1.2" transform="rotate(18 825 469)" fill="#899195" fill-opacity="0.4"/>
<ellipse cx="742" cy="456" rx="4.8" ry="1.7" transform="rotate(18 742 456)" fill="#b8a286" fill-opacity="0.4"/>
<ellipse cx="780" cy="467" rx="2.7" ry="1.3" transform="rotate(18 780 467)" fill="#b8a286" fill-opacity="0.4"/>
<ellipse cx="707" cy="443" rx="3.6" ry="1.6" transform="rotate(18 707 443)" fill="#796b58" fill-opacity="0.4"/>
<ellipse cx="923" cy="505" rx="5.7" ry="1.6" transform="rotate(18 923 505)" fill="#796b58" fill-opacity="0.4"/>
<ellipse cx="804" cy="473" rx="3.4" ry="2.1" transform="rotate(18 804 473)" fill="#b8a286" fill-opacity="0.4"/>
<ellipse cx="829" cy="480" rx="2.6" ry="1.8" transform="rotate(18 829 480)" fill="#ae9a7f" fill-opacity="0.4"/>
<ellipse cx="869" cy="494" rx="2.5" ry="2.3" transform="rotate(18 869 494)" fill="#847560" fill-opacity="0.4"/>
<ellipse cx="795" cy="471" rx="6.8" ry="2.3" transform="rotate(18 795 471)" fill="#b8a286" fill-opacity="0.4"/>
<ellipse cx="942" cy="509" rx="4.1" ry="2.1" transform="rotate(18 942 509)" fill="#796b58" fill-opacity="0.4"/>
<ellipse cx="921" cy="510" rx="2.0" ry="1.6" transform="rotate(18 921 510)" fill="#b8a286" fill-opacity="0.4"/>
<ellipse cx="958" cy="519" rx="6.9" ry="1.4" transform="rotate(18 958 519)" fill="#b8a286" fill-opacity="0.4"/>
<ellipse cx="713" cy="444" rx="6.7" ry="2.1" transform="rotate(18 713 444)" fill="#796b58" fill-opacity="0.4"/>
<ellipse cx="874" cy="503" rx="2.4" ry="2.2" transform="rotate(18 874 503)" fill="#d4d9d4" fill-opacity="0.4"/>
<ellipse cx="680" cy="436" rx="5.2" ry="1.5" transform="rotate(18 680 436)" fill="#8c8f8c" fill-opacity="0.4"/>
<ellipse cx="718" cy="449" rx="5.5" ry="1.2" transform="rotate(18 718 449)" fill="#d4d9d4" fill-opacity="0.4"/>
<ellipse cx="701" cy="444" rx="3.9" ry="1.3" transform="rotate(18 701 444)" fill="#999c99" fill-opacity="0.4"/>
<ellipse cx="860" cy="494" rx="7.0" ry="1.4" transform="rotate(18 860 494)" fill="#c9cec9" fill-opacity="0.4"/>
<ellipse cx="775" cy="472" rx="4.4" ry="1.4" transform="rotate(18 775 472)" fill="#999c99" fill-opacity="0.4"/>
<ellipse cx="754" cy="465" rx="2.3" ry="1.3" transform="rotate(18 754 465)" fill="#c9cec9" fill-opacity="0.4"/>
<ellipse cx="945" cy="523" rx="3.3" ry="2.0" transform="rotate(18 945 523)" fill="#8c8f8c" fill-opacity="0.4"/>
<ellipse cx="958" cy="523" rx="5.5" ry="2.1" transform="rotate(18 958 523)" fill="#8c8f8c" fill-opacity="0.4"/>
<ellipse cx="789" cy="474" rx="6.0" ry="2.1" transform="rotate(18 789 474)" fill="#8c8f8c" fill-opacity="0.4"/>
<ellipse cx="831" cy="487" rx="3.6" ry="2.2" transform="rotate(18 831 487)" fill="#999c99" fill-opacity="0.4"/>
<ellipse cx="749" cy="460" rx="2.5" ry="1.9" transform="rotate(18 749 460)" fill="#c9cec9" fill-opacity="0.4"/>
<ellipse cx="863" cy="530" rx="4.1" ry="2.0" transform="rotate(18 863 530)" fill="#c68854" fill-opacity="0.4"/>
<ellipse cx="965" cy="539" rx="2.3" ry="1.0" transform="rotate(18 965 539)" fill="#c68854" fill-opacity="0.4"/>
<ellipse cx="859" cy="516" rx="2.9" ry="1.7" transform="rotate(18 859 516)" fill="#835a38" fill-opacity="0.4"/>
<ellipse cx="894" cy="524" rx="7.0" ry="2.4" transform="rotate(18 894 524)" fill="#835a38" fill-opacity="0.4"/>
<ellipse cx="779" cy="482" rx="2.2" ry="2.0" transform="rotate(18 779 482)" fill="#c68854" fill-opacity="0.4"/>
<ellipse cx="794" cy="492" rx="4.2" ry="1.2" transform="rotate(18 794 492)" fill="#bc8150" fill-opacity="0.4"/>
<ellipse cx="703" cy="450" rx="6.8" ry="1.2" transform="rotate(18 703 450)" fill="#c68854" fill-opacity="0.4"/>
<ellipse cx="969" cy="542" rx="5.8" ry="1.5" transform="rotate(18 969 542)" fill="#bc8150" fill-opacity="0.4"/>
<ellipse cx="921" cy="526" rx="3.0" ry="1.8" transform="rotate(18 921 526)" fill="#c68854" fill-opacity="0.4"/>
<ellipse cx="814" cy="498" rx="2.2" ry="1.6" transform="rotate(18 814 498)" fill="#c68854" fill-opacity="0.4"/>
<ellipse cx="924" cy="546" rx="3.9" ry="1.7" transform="rotate(18 924 546)" fill="#835a38" fill-opacity="0.4"/>
<ellipse cx="921" cy="525" rx="5.7" ry="2.3" transform="rotate(18 921 525)" fill="#8e623d" fill-opacity="0.4"/>
<ellipse cx="782" cy="485" rx="3.3" ry="2.1" transform="rotate(18 782 485)" fill="#835a38" fill-opacity="0.4"/>
<ellipse cx="775" cy="482" rx="5.6" ry="1.9" transform="rotate(18 775 482)" fill="#835a38" fill-opacity="0.4"/>
<ellipse cx="922" cy="551" rx="2.1" ry="1.4" transform="rotate(18 922 551)" fill="#835a38" fill-opacity="0.4"/>
<ellipse cx="823" cy="517" rx="5.9" ry="2.4" transform="rotate(18 823 517)" fill="#c68854" fill-opacity="0.4"/>
<ellipse cx="924" cy="528" rx="2.9" ry="2.2" transform="rotate(18 924 528)" fill="#c68854" fill-opacity="0.4"/>
<ellipse cx="902" cy="541" rx="5.0" ry="1.5" transform="rotate(18 902 541)" fill="#8e623d" fill-opacity="0.4"/>
<ellipse cx="776" cy="485" rx="4.6" ry="1.6" transform="rotate(18 776 485)" fill="#835a38" fill-opacity="0.4"/>
<ellipse cx="728" cy="467" rx="4.4" ry="1.8" transform="rotate(18 728 467)" fill="#835a38" fill-opacity="0.4"/>
<ellipse cx="728" cy="467" rx="6.9" ry="1.4" transform="rotate(18 728 467)" fill="#835a38" fill-opacity="0.4"/>
<ellipse cx="705" cy="451" rx="6.9" ry="2.5" transform="rotate(18 705 451)" fill="#c68854" fill-opacity="0.4"/>
<ellipse cx="732" cy="462" rx="5.1" ry="2.0" transform="rotate(18 732 462)" fill="#c68854" fill-opacity="0.4"/>
<ellipse cx="904" cy="543" rx="5.9" ry="1.4" transform="rotate(18 904 543)" fill="#835a38" fill-opacity="0.4"/>
<ellipse cx="764" cy="478" rx="5.7" ry="1.3" transform="rotate(18 764 478)" fill="#bc8150" fill-opacity="0.4"/>
<ellipse cx="754" cy="474" rx="3.4" ry="2.4" transform="rotate(18 754 474)" fill="#8e623d" fill-opacity="0.4"/>
<ellipse cx="736" cy="463" rx="7.0" ry="1.8" transform="rotate(18 736 463)" fill="#bc8150" fill-opacity="0.4"/>
<ellipse cx="749" cy="484" rx="7.0" ry="1.2" transform="rotate(18 749 484)" fill="#c68854" fill-opacity="0.4"/>
<ellipse cx="822" cy="513" rx="6.6" ry="1.1" transform="rotate(18 822 513)" fill="#c68854" fill-opacity="0.4"/>
<ellipse cx="768" cy="476" rx="5.0" ry="2.2" transform="rotate(18 768 476)" fill="#8e623d" fill-opacity="0.4"/>
<ellipse cx="738" cy="464" rx="4.2" ry="1.4" transform="rotate(18 738 464)" fill="#8e623d" fill-opacity="0.4"/>
<ellipse cx="913" cy="548" rx="5.2" ry="2.1" transform="rotate(18 913 548)" fill="#835a38" fill-opacity="0.4"/>
<ellipse cx="785" cy="480" rx="2.7" ry="1.3" transform="rotate(18 785 480)" fill="#bc8150" fill-opacity="0.4"/>
<ellipse cx="756" cy="483" rx="6.1" ry="2.2" transform="rotate(18 756 483)" fill="#8e623d" fill-opacity="0.4"/>
<ellipse cx="803" cy="495" rx="2.4" ry="1.0" transform="rotate(18 803 495)" fill="#bc8150" fill-opacity="0.4"/>
<ellipse cx="829" cy="507" rx="2.5" ry="1.6" transform="rotate(18 829 507)" fill="#c68854" fill-opacity="0.4"/>
<ellipse cx="845" cy="517" rx="5.3" ry="1.6" transform="rotate(18 845 517)" fill="#835a38" fill-opacity="0.4"/>
<ellipse cx="761" cy="493" rx="4.1" ry="1.1" transform="rotate(18 761 493)" fill="#bc8150" fill-opacity="0.4"/>
<ellipse cx="904" cy="543" rx="4.1" ry="2.3" transform="rotate(18 904 543)" fill="#c68854" fill-opacity="0.4"/>
<ellipse cx="979" cy="550" rx="4.0" ry="1.6" transform="rotate(18 979 550)" fill="#8e623d" fill-opacity="0.4"/>
<ellipse cx="963" cy="547" rx="4.1" ry="2.2" transform="rotate(18 963 547)" fill="#8e623d" fill-opacity="0.4"/>
<ellipse cx="802" cy="507" rx="5.9" ry="1.2" transform="rotate(18 802 507)" fill="#c68854" fill-opacity="0.4"/>
<ellipse cx="696" cy="448" rx="2.4" ry="1.9" transform="rotate(18 696 448)" fill="#c68854" fill-opacity="0.4"/>
<ellipse cx="791" cy="494" rx="3.7" ry="1.2" transform="rotate(18 791 494)" fill="#8e623d" fill-opacity="0.4"/>
<ellipse cx="732" cy="461" rx="4.5" ry="2.2" transform="rotate(18 732 461)" fill="#c68854" fill-opacity="0.4"/>
<ellipse cx="970" cy="542" rx="6.2" ry="1.1" transform="rotate(18 970 542)" fill="#8e623d" fill-opacity="0.4"/>
<ellipse cx="954" cy="541" rx="2.4" ry="2.1" transform="rotate(18 954 541)" fill="#c68854" fill-opacity="0.4"/>
<ellipse cx="886" cy="538" rx="5.1" ry="1.9" transform="rotate(18 886 538)" fill="#8e623d" fill-opacity="0.4"/>
<ellipse cx="739" cy="473" rx="2.2" ry="2.4" transform="rotate(18 739 473)" fill="#8e623d" fill-opacity="0.4"/>
<ellipse cx="727" cy="465" rx="3.2" ry="2.1" transform="rotate(18 727 465)" fill="#8e623d" fill-opacity="0.4"/>
<ellipse cx="949" cy="532" rx="5.3" ry="1.5" transform="rotate(18 949 532)" fill="#835a38" fill-opacity="0.4"/>
<ellipse cx="797" cy="526" rx="5.2" ry="1.5" transform="rotate(18 797 526)" fill="#e7e8e4" fill-opacity="0.4"/>
<ellipse cx="755" cy="508" rx="4.2" ry="1.7" transform="rotate(18 755 508)" fill="#e7e8e4" fill-opacity="0.4"/>
<ellipse cx="687" cy="488" rx="4.3" ry="1.7" transform="rotate(18 687 488)" fill="#f4f5f0" fill-opacity="0.4"/>
<ellipse cx="866" cy="558" rx="6.1" ry="1.6" transform="rotate(18 866 558)" fill="#afb0ad" fill-opacity="0.4"/>
<ellipse cx="700" cy="485" rx="2.5" ry="1.7" transform="rotate(18 700 485)" fill="#e7e8e4" fill-opacity="0.4"/>
<ellipse cx="833" cy="529" rx="2.4" ry="2.1" transform="rotate(18 833 529)" fill="#afb0ad" fill-opacity="0.4"/>
<ellipse cx="913" cy="566" rx="5.8" ry="2.3" transform="rotate(18 913 566)" fill="#a1a29f" fill-opacity="0.4"/>
<ellipse cx="876" cy="560" rx="6.3" ry="2.5" transform="rotate(18 876 560)" fill="#a1a29f" fill-opacity="0.4"/>
<ellipse cx="900" cy="568" rx="2.7" ry="2.3" transform="rotate(18 900 568)" fill="#afb0ad" fill-opacity="0.4"/>
<ellipse cx="766" cy="523" rx="5.4" ry="2.1" transform="rotate(18 766 523)" fill="#afb0ad" fill-opacity="0.4"/>
<ellipse cx="746" cy="517" rx="2.8" ry="2.3" transform="rotate(18 746 517)" fill="#e7e8e4" fill-opacity="0.4"/>
<ellipse cx="762" cy="522" rx="3.3" ry="2.4" transform="rotate(18 762 522)" fill="#afb0ad" fill-opacity="0.4"/>
<ellipse cx="824" cy="539" rx="3.6" ry="1.1" transform="rotate(18 824 539)" fill="#afb0ad" fill-opacity="0.4"/>
<ellipse cx="735" cy="493" rx="5.4" ry="2.3" transform="rotate(18 735 493)" fill="#e7e8e4" fill-opacity="0.4"/>
<ellipse cx="731" cy="510" rx="5.8" ry="1.1" transform="rotate(18 731 510)" fill="#a1a29f" fill-opacity="0.4"/>
<ellipse cx="937" cy="583" rx="4.8" ry="1.9" transform="rotate(18 937 583)" fill="#f4f5f0" fill-opacity="0.4"/>
<ellipse cx="945" cy="568" rx="5.7" ry="1.6" transform="rotate(18 945 568)" fill="#f4f5f0" fill-opacity="0.4"/>
<ellipse cx="793" cy="522" rx="3.8" ry="2.1" transform="rotate(18 793 522)" fill="#afb0ad" fill-opacity="0.4"/>
<ellipse cx="813" cy="525" rx="3.5" ry="1.8" transform="rotate(18 813 525)" fill="#a1a29f" fill-opacity="0.4"/>
<ellipse cx="773" cy="530" rx="5.7" ry="2.1" transform="rotate(18 773 530)" fill="#e7e8e4" fill-opacity="0.4"/>
<ellipse cx="746" cy="502" rx="4.1" ry="1.5" transform="rotate(18 746 502)" fill="#f4f5f0" fill-opacity="0.4"/>
<ellipse cx="694" cy="486" rx="2.1" ry="1.0" transform="rotate(18 694 486)" fill="#a1a29f" fill-opacity="0.4"/>
<ellipse cx="786" cy="513" rx="4.7" ry="1.6" transform="rotate(18 786 513)" fill="#e7e8e4" fill-opacity="0.4"/>
<ellipse cx="770" cy="507" rx="5.1" ry="1.7" transform="rotate(18 770 507)" fill="#e7e8e4" fill-opacity="0.4"/>
<ellipse cx="720" cy="510" rx="5.5" ry="1.7" transform="rotate(18 720 510)" fill="#afb0ad" fill-opacity="0.4"/>
<ellipse cx="699" cy="477" rx="4.0" ry="1.4" transform="rotate(18 699 477)" fill="#e7e8e4" fill-opacity="0.4"/>
<ellipse cx="683" cy="487" rx="5.0" ry="1.9" transform="rotate(18 683 487)" fill="#e7e8e4" fill-opacity="0.4"/>
<ellipse cx="861" cy="549" rx="3.2" ry="2.4" transform="rotate(18 861 549)" fill="#f4f5f0" fill-opacity="0.4"/>
<ellipse cx="693" cy="487" rx="2.9" ry="1.2" transform="rotate(18 693 487)" fill="#f4f5f0" fill-opacity="0.4"/>
<ellipse cx="954" cy="571" rx="2.7" ry="1.3" transform="rotate(18 954 571)" fill="#afb0ad" fill-opacity="0.4"/>
<ellipse cx="862" cy="550" rx="6.1" ry="1.3" transform="rotate(18 862 550)" fill="#f4f5f0" fill-opacity="0.4"/>
<ellipse cx="773" cy="512" rx="7.0" ry="2.1" transform="rotate(18 773 512)" fill="#a1a29f" fill-opacity="0.4"/>
<ellipse cx="823" cy="537" rx="6.2" ry="2.1" transform="rotate(18 823 537)" fill="#f4f5f0" fill-opacity="0.4"/>
<ellipse cx="820" cy="541" rx="2.9" ry="2.5" transform="rotate(18 820 541)" fill="#f4f5f0" fill-opacity="0.4"/>
<ellipse cx="758" cy="516" rx="3.7" ry="2.1" transform="rotate(18 758 516)" fill="#a1a29f" fill-opacity="0.4"/>
<ellipse cx="889" cy="566" rx="3.3" ry="1.8" transform="rotate(18 889 566)" fill="#a1a29f" fill-opacity="0.4"/>
<ellipse cx="811" cy="539" rx="3.5" ry="2.4" transform="rotate(18 811 539)" fill="#e7e8e4" fill-opacity="0.4"/>
<ellipse cx="948" cy="569" rx="2.8" ry="2.4" transform="rotate(18 948 569)" fill="#a1a29f" fill-opacity="0.4"/>
<ellipse cx="933" cy="566" rx="5.7" ry="1.5" transform="rotate(18 933 566)" fill="#afb0ad" fill-opacity="0.4"/>
<ellipse cx="944" cy="572" rx="3.9" ry="2.3" transform="rotate(18 944 572)" fill="#afb0ad" fill-opacity="0.4"/>
<ellipse cx="957" cy="589" rx="4.4" ry="1.8" transform="rotate(18 957 589)" fill="#f4f5f0" fill-opacity="0.4"/>
<ellipse cx="682" cy="466" rx="4.9" ry="1.5" transform="rotate(18 682 466)" fill="#afb0ad" fill-opacity="0.4"/>
<ellipse cx="744" cy="510" rx="4.8" ry="1.3" transform="rotate(18 744 510)" fill="#a1a29f" fill-opacity="0.4"/>
<ellipse cx="690" cy="472" rx="3.7" ry="1.2" transform="rotate(18 690 472)" fill="#afb0ad" fill-opacity="0.4"/>
<ellipse cx="689" cy="470" rx="5.5" ry="2.1" transform="rotate(18 689 470)" fill="#a1a29f" fill-opacity="0.4"/>
<ellipse cx="700" cy="492" rx="3.0" ry="2.4" transform="rotate(18 700 492)" fill="#e7e8e4" fill-opacity="0.4"/>
<ellipse cx="840" cy="580" rx="2.5" ry="1.3" transform="rotate(18 840 580)" fill="#c69b73" fill-opacity="0.4"/>
<ellipse cx="714" cy="517" rx="6.1" ry="1.9" transform="rotate(18 714 517)" fill="#83664c" fill-opacity="0.4"/>
<ellipse cx="766" cy="538" rx="6.0" ry="2.0" transform="rotate(18 766 538)" fill="#83664c" fill-opacity="0.4"/>
<ellipse cx="768" cy="545" rx="2.1" ry="1.4" transform="rotate(18 768 545)" fill="#bc936d" fill-opacity="0.4"/>
<ellipse cx="765" cy="553" rx="6.6" ry="2.2" transform="rotate(18 765 553)" fill="#bc936d" fill-opacity="0.4"/>
<ellipse cx="861" cy="580" rx="5.1" ry="1.0" transform="rotate(18 861 580)" fill="#bc936d" fill-opacity="0.4"/>
<ellipse cx="804" cy="561" rx="3.7" ry="2.1" transform="rotate(18 804 561)" fill="#83664c" fill-opacity="0.4"/>
<ellipse cx="841" cy="567" rx="4.9" ry="1.4" transform="rotate(18 841 567)" fill="#83664c" fill-opacity="0.4"/>
<ellipse cx="811" cy="566" rx="5.8" ry="2.5" transform="rotate(18 811 566)" fill="#bc936d" fill-opacity="0.4"/>
<ellipse cx="681" cy="512" rx="5.5" ry="2.2" transform="rotate(18 681 512)" fill="#c69b73" fill-opacity="0.4"/>
<ellipse cx="970" cy="610" rx="4.9" ry="1.2" transform="rotate(18 970 610)" fill="#bc936d" fill-opacity="0.4"/>
<ellipse cx="925" cy="609" rx="4.5" ry="1.2" transform="rotate(18 925 609)" fill="#8e7053" fill-opacity="0.4"/>
<ellipse cx="871" cy="572" rx="5.1" ry="1.5" transform="rotate(18 871 572)" fill="#83664c" fill-opacity="0.4"/>
<ellipse cx="800" cy="558" rx="4.1" ry="2.0" transform="rotate(18 800 558)" fill="#83664c" fill-opacity="0.4"/>
<ellipse cx="792" cy="552" rx="6.5" ry="1.8" transform="rotate(18 792 552)" fill="#c69b73" fill-opacity="0.4"/>
<ellipse cx="794" cy="570" rx="6.7" ry="1.2" transform="rotate(18 794 570)" fill="#8e7053" fill-opacity="0.4"/>
<ellipse cx="858" cy="586" rx="3.7" ry="1.5" transform="rotate(18 858 586)" fill="#83664c" fill-opacity="0.4"/>
<ellipse cx="727" cy="539" rx="2.8" ry="1.7" transform="rotate(18 727 539)" fill="#bc936d" fill-opacity="0.4"/>
<ellipse cx="912" cy="597" rx="3.7" ry="2.0" transform="rotate(18 912 597)" fill="#8e7053" fill-opacity="0.4"/>
<ellipse cx="889" cy="589" rx="3.5" ry="2.1" transform="rotate(18 889 589)" fill="#bc936d" fill-opacity="0.4"/>
<ellipse cx="933" cy="592" rx="6.9" ry="2.1" transform="rotate(18 933 592)" fill="#8e7053" fill-opacity="0.4"/>
<ellipse cx="861" cy="577" rx="3.6" ry="1.3" transform="rotate(18 861 577)" fill="#8e7053" fill-opacity="0.4"/>
<ellipse cx="973" cy="614" rx="2.8" ry="2.0" transform="rotate(18 973 614)" fill="#83664c" fill-opacity="0.4"/>
<ellipse cx="739" cy="529" rx="6.0" ry="2.1" transform="rotate(18 739 529)" fill="#8e7053" fill-opacity="0.4"/>
<ellipse cx="810" cy="556" rx="3.4" ry="2.3" transform="rotate(18 810 556)" fill="#83664c" fill-opacity="0.4"/>
<ellipse cx="819" cy="554" rx="5.5" ry="1.8" transform="rotate(18 819 554)" fill="#c69b73" fill-opacity="0.4"/>
<ellipse cx="870" cy="583" rx="3.3" ry="2.1" transform="rotate(18 870 583)" fill="#8e7053" fill-opacity="0.4"/>
<ellipse cx="682" cy="508" rx="5.5" ry="1.9" transform="rotate(18 682 508)" fill="#c69b73" fill-opacity="0.4"/>
<ellipse cx="874" cy="595" rx="5.4" ry="2.0" transform="rotate(18 874 595)" fill="#8e7053" fill-opacity="0.4"/>
<ellipse cx="816" cy="561" rx="6.5" ry="1.4" transform="rotate(18 816 561)" fill="#83664c" fill-opacity="0.4"/>
<ellipse cx="800" cy="567" rx="3.3" ry="1.6" transform="rotate(18 800 567)" fill="#8e7053" fill-opacity="0.4"/>
<ellipse cx="817" cy="571" rx="4.6" ry="2.0" transform="rotate(18 817 571)" fill="#c69b73" fill-opacity="0.4"/>
<ellipse cx="942" cy="611" rx="5.9" ry="1.6" transform="rotate(18 942 611)" fill="#bc936d" fill-opacity="0.4"/>
<ellipse cx="827" cy="585" rx="3.3" ry="1.3" transform="rotate(18 827 585)" fill="#83664c" fill-opacity="0.4"/>
<ellipse cx="895" cy="603" rx="4.6" ry="1.2" transform="rotate(18 895 603)" fill="#8e7053" fill-opacity="0.4"/>
<ellipse cx="852" cy="580" rx="4.6" ry="2.0" transform="rotate(18 852 580)" fill="#c69b73" fill-opacity="0.4"/>
<ellipse cx="929" cy="599" rx="5.7" ry="1.7" transform="rotate(18 929 599)" fill="#c69b73" fill-opacity="0.4"/>
<ellipse cx="977" cy="604" rx="5.6" ry="1.9" transform="rotate(18 977 604)" fill="#83664c" fill-opacity="0.4"/>
<ellipse cx="871" cy="577" rx="4.0" ry="1.0" transform="rotate(18 871 577)" fill="#c69b73" fill-opacity="0.4"/>
<ellipse cx="806" cy="561" rx="4.9" ry="1.2" transform="rotate(18 806 561)" fill="#bc936d" fill-opacity="0.4"/>
<ellipse cx="771" cy="547" rx="7.0" ry="2.4" transform="rotate(18 771 547)" fill="#8e7053" fill-opacity="0.4"/>
<ellipse cx="819" cy="558" rx="6.0" ry="2.0" transform="rotate(18 819 558)" fill="#83664c" fill-opacity="0.4"/>
<ellipse cx="821" cy="570" rx="6.1" ry="1.2" transform="rotate(18 821 570)" fill="#8e7053" fill-opacity="0.4"/>
<ellipse cx="880" cy="596" rx="4.3" ry="1.4" transform="rotate(18 880 596)" fill="#c69b73" fill-opacity="0.4"/>
<ellipse cx="844" cy="565" rx="3.8" ry="2.3" transform="rotate(18 844 565)" fill="#c69b73" fill-opacity="0.4"/>
<ellipse cx="760" cy="543" rx="6.9" ry="2.0" transform="rotate(18 760 543)" fill="#bc936d" fill-opacity="0.4"/>
<ellipse cx="824" cy="579" rx="3.8" ry="2.0" transform="rotate(18 824 579)" fill="#bc936d" fill-opacity="0.4"/>
<ellipse cx="776" cy="552" rx="5.3" ry="1.5" transform="rotate(18 776 552)" fill="#83664c" fill-opacity="0.4"/>
<ellipse cx="959" cy="613" rx="2.4" ry="1.8" transform="rotate(18 959 613)" fill="#83664c" fill-opacity="0.4"/>
<ellipse cx="777" cy="565" rx="5.2" ry="1.0" transform="rotate(18 777 565)" fill="#bc936d" fill-opacity="0.4"/>
<ellipse cx="683" cy="520" rx="3.3" ry="1.2" transform="rotate(18 683 520)" fill="#bc936d" fill-opacity="0.4"/>
<ellipse cx="723" cy="524" rx="3.7" ry="1.2" transform="rotate(18 723 524)" fill="#c69b73" fill-opacity="0.4"/>
<ellipse cx="951" cy="611" rx="5.0" ry="2.0" transform="rotate(18 951 611)" fill="#8e7053" fill-opacity="0.4"/>
<ellipse cx="973" cy="601" rx="3.0" ry="2.0" transform="rotate(18 973 601)" fill="#bc936d" fill-opacity="0.4"/>
<ellipse cx="839" cy="582" rx="5.4" ry="1.2" transform="rotate(18 839 582)" fill="#c69b73" fill-opacity="0.4"/>
<ellipse cx="716" cy="525" rx="4.4" ry="1.8" transform="rotate(18 716 525)" fill="#8e7053" fill-opacity="0.4"/>
<ellipse cx="825" cy="582" rx="3.2" ry="1.2" transform="rotate(18 825 582)" fill="#c69b73" fill-opacity="0.4"/>
<ellipse cx="860" cy="588" rx="6.2" ry="1.7" transform="rotate(18 860 588)" fill="#8e7053" fill-opacity="0.4"/>
<ellipse cx="849" cy="582" rx="3.9" ry="1.6" transform="rotate(18 849 582)" fill="#c69b73" fill-opacity="0.4"/>
<ellipse cx="968" cy="622" rx="5.2" ry="1.0" transform="rotate(18 968 622)" fill="#d7e4ed" fill-opacity="0.4"/>
<ellipse cx="863" cy="610" rx="6.0" ry="1.1" transform="rotate(18 863 610)" fill="#d7e4ed" fill-opacity="0.4"/>
<ellipse cx="825" cy="600" rx="2.2" ry="2.1" transform="rotate(18 825 600)" fill="#a3adb4" fill-opacity="0.4"/>
<ellipse cx="868" cy="607" rx="3.7" ry="2.2" transform="rotate(18 868 607)" fill="#d7e4ed" fill-opacity="0.4"/>
<ellipse cx="846" cy="608" rx="4.2" ry="1.6" transform="rotate(18 846 608)" fill="#d7e4ed" fill-opacity="0.4"/>
<ellipse cx="846" cy="607" rx="3.8" ry="1.7" transform="rotate(18 846 607)" fill="#d7e4ed" fill-opacity="0.4"/>
<ellipse cx="780" cy="585" rx="6.9" ry="2.0" transform="rotate(18 780 585)" fill="#d7e4ed" fill-opacity="0.4"/>
<ellipse cx="918" cy="617" rx="5.6" ry="1.2" transform="rotate(18 918 617)" fill="#d7e4ed" fill-opacity="0.4"/>
<ellipse cx="972" cy="623" rx="4.0" ry="1.8" transform="rotate(18 972 623)" fill="#959fa5" fill-opacity="0.4"/>
<ellipse cx="802" cy="589" rx="3.5" ry="1.0" transform="rotate(18 802 589)" fill="#e2f0fa" fill-opacity="0.4"/>
<ellipse cx="737" cy="562" rx="5.9" ry="2.4" transform="rotate(18 737 562)" fill="#959fa5" fill-opacity="0.4"/>
<ellipse cx="864" cy="609" rx="3.1" ry="2.0" transform="rotate(18 864 609)" fill="#959fa5" fill-opacity="0.4"/>
<ellipse cx="817" cy="597" rx="5.3" ry="2.3" transform="rotate(18 817 597)" fill="#959fa5" fill-opacity="0.4"/>
<ellipse cx="806" cy="584" rx="3.8" ry="2.2" transform="rotate(18 806 584)" fill="#959fa5" fill-opacity="0.4"/>
<ellipse cx="916" cy="618" rx="6.3" ry="1.3" transform="rotate(18 916 618)" fill="#d7e4ed" fill-opacity="0.4"/>
<ellipse cx="690" cy="528" rx="4.5" ry="1.8" transform="rotate(18 690 528)" fill="#959fa5" fill-opacity="0.4"/>
<ellipse cx="927" cy="622" rx="4.9" ry="2.4" transform="rotate(18 927 622)" fill="#e2f0fa" fill-opacity="0.4"/>
<ellipse cx="814" cy="586" rx="5.0" ry="2.5" transform="rotate(18 814 586)" fill="#e2f0fa" fill-opacity="0.4"/>
<ellipse cx="878" cy="607" rx="4.7" ry="1.1" transform="rotate(18 878 607)" fill="#e2f0fa" fill-opacity="0.4"/>
<ellipse cx="822" cy="600" rx="4.1" ry="1.0" transform="rotate(18 822 600)" fill="#959fa5" fill-opacity="0.4"/>
<ellipse cx="881" cy="617" rx="3.1" ry="1.2" transform="rotate(18 881 617)" fill="#959fa5" fill-opacity="0.4"/>
<ellipse cx="822" cy="592" rx="4.3" ry="2.1" transform="rotate(18 822 592)" fill="#a3adb4" fill-opacity="0.4"/>
<ellipse cx="957" cy="622" rx="5.6" ry="1.1" transform="rotate(18 957 622)" fill="#a3adb4" fill-opacity="0.4"/>
<ellipse cx="869" cy="611" rx="5.3" ry="2.3" transform="rotate(18 869 611)" fill="#e2f0fa" fill-opacity="0.4"/>
<ellipse cx="954" cy="620" rx="2.1" ry="1.0" transform="rotate(18 954 620)" fill="#959fa5" fill-opacity="0.4"/>
<ellipse cx="875" cy="629" rx="3.9" ry="1.5" transform="rotate(18 875 629)" fill="#868783" fill-opacity="0.4"/>
<ellipse cx="860" cy="628" rx="5.0" ry="1.5" transform="rotate(18 860 628)" fill="#cacdc6" fill-opacity="0.4"/>
<ellipse cx="965" cy="641" rx="5.4" ry="1.2" transform="rotate(18 965 641)" fill="#cacdc6" fill-opacity="0.4"/>
<ellipse cx="919" cy="631" rx="5.1" ry="1.6" transform="rotate(18 919 631)" fill="#92938e" fill-opacity="0.4"/>
<ellipse cx="796" cy="607" rx="5.9" ry="1.9" transform="rotate(18 796 607)" fill="#c0c2bc" fill-opacity="0.4"/>
<ellipse cx="768" cy="584" rx="6.3" ry="2.1" transform="rotate(18 768 584)" fill="#c0c2bc" fill-opacity="0.4"/>
<ellipse cx="685" cy="542" rx="4.9" ry="2.5" transform="rotate(18 685 542)" fill="#c0c2bc" fill-opacity="0.4"/>
<ellipse cx="754" cy="583" rx="5.0" ry="2.3" transform="rotate(18 754 583)" fill="#cacdc6" fill-opacity="0.4"/>
<ellipse cx="922" cy="630" rx="3.6" ry="1.4" transform="rotate(18 922 630)" fill="#868783" fill-opacity="0.4"/>
<ellipse cx="727" cy="582" rx="3.4" ry="1.2" transform="rotate(18 727 582)" fill="#868783" fill-opacity="0.4"/>
<ellipse cx="947" cy="643" rx="3.4" ry="2.3" transform="rotate(18 947 643)" fill="#92938e" fill-opacity="0.4"/>
<ellipse cx="922" cy="635" rx="3.7" ry="1.1" transform="rotate(18 922 635)" fill="#cacdc6" fill-opacity="0.4"/>
<ellipse cx="846" cy="622" rx="5.9" ry="2.1" transform="rotate(18 846 622)" fill="#92938e" fill-opacity="0.4"/>
<ellipse cx="975" cy="636" rx="5.4" ry="1.7" transform="rotate(18 975 636)" fill="#868783" fill-opacity="0.4"/>
<ellipse cx="742" cy="575" rx="6.0" ry="1.7" transform="rotate(18 742 575)" fill="#868783" fill-opacity="0.4"/>
<ellipse cx="706" cy="571" rx="3.2" ry="1.9" transform="rotate(18 706 571)" fill="#868783" fill-opacity="0.4"/>
<ellipse cx="949" cy="642" rx="4.4" ry="1.9" transform="rotate(18 949 642)" fill="#c0c2bc" fill-opacity="0.4"/>
<ellipse cx="737" cy="571" rx="6.0" ry="1.4" transform="rotate(18 737 571)" fill="#92938e" fill-opacity="0.4"/>
<ellipse cx="853" cy="619" rx="3.2" ry="2.4" transform="rotate(18 853 619)" fill="#92938e" fill-opacity="0.4"/>
<ellipse cx="828" cy="618" rx="5.2" ry="2.2" transform="rotate(18 828 618)" fill="#c0c2bc" fill-opacity="0.4"/>
<ellipse cx="727" cy="575" rx="3.4" ry="1.9" transform="rotate(18 727 575)" fill="#c0c2bc" fill-opacity="0.4"/>
<ellipse cx="708" cy="556" rx="4.9" ry="1.3" transform="rotate(18 708 556)" fill="#cacdc6" fill-opacity="0.4"/>
<ellipse cx="958" cy="633" rx="6.7" ry="2.2" transform="rotate(18 958 633)" fill="#868783" fill-opacity="0.4"/>
<ellipse cx="926" cy="640" rx="6.2" ry="1.5" transform="rotate(18 926 640)" fill="#c0c2bc" fill-opacity="0.4"/>
<ellipse cx="978" cy="637" rx="2.3" ry="1.8" transform="rotate(18 978 637)" fill="#868783" fill-opacity="0.4"/>
<ellipse cx="941" cy="650" rx="6.3" ry="2.0" transform="rotate(18 941 650)" fill="#7b7871" fill-opacity="0.4"/>
<ellipse cx="957" cy="656" rx="3.3" ry="1.8" transform="rotate(18 957 656)" fill="#7b7871" fill-opacity="0.4"/>
<ellipse cx="872" cy="643" rx="2.9" ry="2.3" transform="rotate(18 872 643)" fill="#bab5ac" fill-opacity="0.4"/>
<ellipse cx="791" cy="615" rx="2.9" ry="2.4" transform="rotate(18 791 615)" fill="#86827c" fill-opacity="0.4"/>
<ellipse cx="962" cy="649" rx="6.2" ry="1.1" transform="rotate(18 962 649)" fill="#7b7871" fill-opacity="0.4"/>
<ellipse cx="916" cy="649" rx="2.3" ry="1.2" transform="rotate(18 916 649)" fill="#bab5ac" fill-opacity="0.4"/>
<ellipse cx="906" cy="650" rx="4.9" ry="1.7" transform="rotate(18 906 650)" fill="#b0aca3" fill-opacity="0.4"/>
<ellipse cx="876" cy="639" rx="3.3" ry="1.2" transform="rotate(18 876 639)" fill="#b0aca3" fill-opacity="0.4"/>
<ellipse cx="824" cy="624" rx="6.0" ry="2.4" transform="rotate(18 824 624)" fill="#86827c" fill-opacity="0.4"/>
<ellipse cx="948" cy="652" rx="6.0" ry="1.2" transform="rotate(18 948 652)" fill="#86827c" fill-opacity="0.4"/>
<ellipse cx="930" cy="645" rx="6.4" ry="1.2" transform="rotate(18 930 645)" fill="#b0aca3" fill-opacity="0.4"/>
<ellipse cx="814" cy="620" rx="6.2" ry="1.9" transform="rotate(18 814 620)" fill="#bab5ac" fill-opacity="0.4"/>
<ellipse cx="816" cy="623" rx="4.4" ry="1.9" transform="rotate(18 816 623)" fill="#86827c" fill-opacity="0.4"/>
<ellipse cx="723" cy="591" rx="2.9" ry="1.7" transform="rotate(18 723 591)" fill="#7b7871" fill-opacity="0.4"/>
<ellipse cx="947" cy="651" rx="3.3" ry="1.6" transform="rotate(18 947 651)" fill="#86827c" fill-opacity="0.4"/>
<ellipse cx="727" cy="593" rx="3.7" ry="1.3" transform="rotate(18 727 593)" fill="#b0aca3" fill-opacity="0.4"/>
<ellipse cx="827" cy="626" rx="2.6" ry="2.5" transform="rotate(18 827 626)" fill="#bab5ac" fill-opacity="0.4"/>
<ellipse cx="697" cy="595" rx="4.8" ry="2.3" transform="rotate(18 697 595)" fill="#86827c" fill-opacity="0.4"/>
<ellipse cx="716" cy="598" rx="4.2" ry="1.4" transform="rotate(18 716 598)" fill="#b0aca3" fill-opacity="0.4"/>
<ellipse cx="752" cy="602" rx="3.4" ry="2.3" transform="rotate(18 752 602)" fill="#bab5ac" fill-opacity="0.4"/>
<ellipse cx="697" cy="592" rx="2.7" ry="2.0" transform="rotate(18 697 592)" fill="#b0aca3" fill-opacity="0.4"/>
<ellipse cx="813" cy="625" rx="4.2" ry="2.2" transform="rotate(18 813 625)" fill="#86827c" fill-opacity="0.4"/>
<ellipse cx="963" cy="664" rx="4.2" ry="2.4" transform="rotate(18 963 664)" fill="#ae9a84" fill-opacity="0.4"/>
<ellipse cx="745" cy="624" rx="6.2" ry="1.8" transform="rotate(18 745 624)" fill="#847564" fill-opacity="0.4"/>
<ellipse cx="749" cy="619" rx="6.1" ry="2.3" transform="rotate(18 749 619)" fill="#796b5c" fill-opacity="0.4"/>
<ellipse cx="899" cy="659" rx="3.0" ry="1.9" transform="rotate(18 899 659)" fill="#847564" fill-opacity="0.4"/>
<ellipse cx="892" cy="659" rx="3.0" ry="1.1" transform="rotate(18 892 659)" fill="#ae9a84" fill-opacity="0.4"/>
<ellipse cx="900" cy="656" rx="4.6" ry="1.5" transform="rotate(18 900 656)" fill="#796b5c" fill-opacity="0.4"/>
<ellipse cx="765" cy="630" rx="2.5" ry="1.6" transform="rotate(18 765 630)" fill="#b8a28b" fill-opacity="0.4"/>
<ellipse cx="909" cy="655" rx="3.2" ry="1.8" transform="rotate(18 909 655)" fill="#ae9a84" fill-opacity="0.4"/>
<ellipse cx="976" cy="664" rx="4.9" ry="2.3" transform="rotate(18 976 664)" fill="#ae9a84" fill-opacity="0.4"/>
<ellipse cx="787" cy="640" rx="2.6" ry="2.1" transform="rotate(18 787 640)" fill="#796b5c" fill-opacity="0.4"/>
<ellipse cx="925" cy="663" rx="5.9" ry="2.3" transform="rotate(18 925 663)" fill="#ae9a84" fill-opacity="0.4"/>
<ellipse cx="853" cy="653" rx="6.4" ry="2.4" transform="rotate(18 853 653)" fill="#ae9a84" fill-opacity="0.4"/>
<ellipse cx="828" cy="644" rx="2.1" ry="2.5" transform="rotate(18 828 644)" fill="#847564" fill-opacity="0.4"/>
<ellipse cx="747" cy="619" rx="3.6" ry="1.8" transform="rotate(18 747 619)" fill="#796b5c" fill-opacity="0.4"/>
<ellipse cx="967" cy="663" rx="3.3" ry="2.3" transform="rotate(18 967 663)" fill="#847564" fill-opacity="0.4"/>
<ellipse cx="871" cy="652" rx="5.5" ry="1.2" transform="rotate(18 871 652)" fill="#847564" fill-opacity="0.4"/>
<ellipse cx="941" cy="664" rx="3.4" ry="1.7" transform="rotate(18 941 664)" fill="#796b5c" fill-opacity="0.4"/>
<ellipse cx="856" cy="652" rx="2.6" ry="1.6" transform="rotate(18 856 652)" fill="#796b5c" fill-opacity="0.4"/>
<ellipse cx="721" cy="617" rx="2.7" ry="1.9" transform="rotate(18 721 617)" fill="#847564" fill-opacity="0.4"/>
<ellipse cx="904" cy="654" rx="6.7" ry="1.6" transform="rotate(18 904 654)" fill="#796b5c" fill-opacity="0.4"/>
<ellipse cx="806" cy="643" rx="4.0" ry="2.4" transform="rotate(18 806 643)" fill="#796b5c" fill-opacity="0.4"/>
<ellipse cx="913" cy="657" rx="6.2" ry="2.1" transform="rotate(18 913 657)" fill="#847564" fill-opacity="0.4"/>
<ellipse cx="933" cy="662" rx="6.1" ry="2.3" transform="rotate(18 933 662)" fill="#ae9a84" fill-opacity="0.4"/>
<ellipse cx="696" cy="608" rx="3.2" ry="1.6" transform="rotate(18 696 608)" fill="#ae9a84" fill-opacity="0.4"/>
<ellipse cx="870" cy="650" rx="2.3" ry="1.6" transform="rotate(18 870 650)" fill="#847564" fill-opacity="0.4"/>
<ellipse cx="831" cy="663" rx="4.1" ry="1.6" transform="rotate(18 831 663)" fill="#8e9395" fill-opacity="0.4"/>
<ellipse cx="979" cy="714" rx="6.0" ry="2.3" transform="rotate(18 979 714)" fill="#838789" fill-opacity="0.4"/>
<ellipse cx="945" cy="679" rx="6.6" ry="1.9" transform="rotate(18 945 679)" fill="#bcc2c5" fill-opacity="0.4"/>
<ellipse cx="868" cy="726" rx="5.1" ry="1.4" transform="rotate(18 868 726)" fill="#838789" fill-opacity="0.4"/>
<ellipse cx="836" cy="693" rx="3.4" ry="1.5" transform="rotate(18 836 693)" fill="#838789" fill-opacity="0.4"/>
<ellipse cx="874" cy="677" rx="2.4" ry="1.9" transform="rotate(18 874 677)" fill="#bcc2c5" fill-opacity="0.4"/>
<ellipse cx="960" cy="711" rx="6.4" ry="2.4" transform="rotate(18 960 711)" fill="#8e9395" fill-opacity="0.4"/>
<ellipse cx="853" cy="685" rx="5.7" ry="1.4" transform="rotate(18 853 685)" fill="#838789" fill-opacity="0.4"/>
<ellipse cx="816" cy="706" rx="5.3" ry="1.3" transform="rotate(18 816 706)" fill="#8e9395" fill-opacity="0.4"/>
<ellipse cx="893" cy="705" rx="5.1" ry="1.7" transform="rotate(18 893 705)" fill="#bcc2c5" fill-opacity="0.4"/>
<ellipse cx="773" cy="663" rx="2.9" ry="1.8" transform="rotate(18 773 663)" fill="#8e9395" fill-opacity="0.4"/>
<ellipse cx="971" cy="709" rx="2.8" ry="2.4" transform="rotate(18 971 709)" fill="#bcc2c5" fill-opacity="0.4"/>
<ellipse cx="777" cy="670" rx="3.4" ry="2.5" transform="rotate(18 777 670)" fill="#bcc2c5" fill-opacity="0.4"/>
<ellipse cx="769" cy="697" rx="4.8" ry="1.9" transform="rotate(18 769 697)" fill="#8e9395" fill-opacity="0.4"/>
<ellipse cx="784" cy="694" rx="6.2" ry="1.5" transform="rotate(18 784 694)" fill="#c6cdcf" fill-opacity="0.4"/>
<ellipse cx="909" cy="712" rx="4.1" ry="2.0" transform="rotate(18 909 712)" fill="#8e9395" fill-opacity="0.4"/>
<ellipse cx="722" cy="645" rx="6.1" ry="1.8" transform="rotate(18 722 645)" fill="#bcc2c5" fill-opacity="0.4"/>
<ellipse cx="902" cy="727" rx="3.3" ry="1.9" transform="rotate(18 902 727)" fill="#c6cdcf" fill-opacity="0.4"/>
<ellipse cx="870" cy="719" rx="6.4" ry="1.0" transform="rotate(18 870 719)" fill="#c6cdcf" fill-opacity="0.4"/>
<ellipse cx="910" cy="717" rx="4.0" ry="2.5" transform="rotate(18 910 717)" fill="#c6cdcf" fill-opacity="0.4"/>
<ellipse cx="725" cy="685" rx="6.4" ry="1.9" transform="rotate(18 725 685)" fill="#bcc2c5" fill-opacity="0.4"/>
<ellipse cx="794" cy="683" rx="3.4" ry="1.5" transform="rotate(18 794 683)" fill="#c6cdcf" fill-opacity="0.4"/>
<ellipse cx="786" cy="686" rx="5.2" ry="1.0" transform="rotate(18 786 686)" fill="#c6cdcf" fill-opacity="0.4"/>
<ellipse cx="904" cy="746" rx="4.2" ry="1.3" transform="rotate(18 904 746)" fill="#c6cdcf" fill-opacity="0.4"/>
<ellipse cx="771" cy="656" rx="4.9" ry="1.1" transform="rotate(18 771 656)" fill="#c6cdcf" fill-opacity="0.4"/>
<ellipse cx="956" cy="702" rx="6.8" ry="1.3" transform="rotate(18 956 702)" fill="#8e9395" fill-opacity="0.4"/>
<ellipse cx="808" cy="719" rx="2.1" ry="1.4" transform="rotate(18 808 719)" fill="#838789" fill-opacity="0.4"/>
<ellipse cx="949" cy="699" rx="4.7" ry="2.5" transform="rotate(18 949 699)" fill="#bcc2c5" fill-opacity="0.4"/>
<ellipse cx="835" cy="698" rx="3.9" ry="1.5" transform="rotate(18 835 698)" fill="#c6cdcf" fill-opacity="0.4"/>
<ellipse cx="858" cy="691" rx="5.4" ry="1.8" transform="rotate(18 858 691)" fill="#838789" fill-opacity="0.4"/>
<ellipse cx="710" cy="651" rx="5.2" ry="2.4" transform="rotate(18 710 651)" fill="#c6cdcf" fill-opacity="0.4"/>
<ellipse cx="726" cy="645" rx="4.4" ry="1.7" transform="rotate(18 726 645)" fill="#c6cdcf" fill-opacity="0.4"/>
<ellipse cx="867" cy="740" rx="5.5" ry="2.1" transform="rotate(18 867 740)" fill="#bcc2c5" fill-opacity="0.4"/>
<ellipse cx="708" cy="649" rx="6.9" ry="2.2" transform="rotate(18 708 649)" fill="#bcc2c5" fill-opacity="0.4"/>
<ellipse cx="834" cy="669" rx="5.4" ry="2.2" transform="rotate(18 834 669)" fill="#bcc2c5" fill-opacity="0.4"/>
<ellipse cx="977" cy="746" rx="5.2" ry="1.8" transform="rotate(18 977 746)" fill="#c6cdcf" fill-opacity="0.4"/>
<ellipse cx="925" cy="690" rx="4.1" ry="1.1" transform="rotate(18 925 690)" fill="#8e9395" fill-opacity="0.4"/>
<ellipse cx="849" cy="672" rx="5.5" ry="1.0" transform="rotate(18 849 672)" fill="#838789" fill-opacity="0.4"/>
<ellipse cx="681" cy="659" rx="6.6" ry="1.6" transform="rotate(18 681 659)" fill="#838789" fill-opacity="0.4"/>
<ellipse cx="710" cy="629" rx="3.0" ry="1.7" transform="rotate(18 710 629)" fill="#838789" fill-opacity="0.4"/>
<ellipse cx="846" cy="683" rx="4.9" ry="1.6" transform="rotate(18 846 683)" fill="#8e9395" fill-opacity="0.4"/>
<ellipse cx="716" cy="640" rx="2.1" ry="1.1" transform="rotate(18 716 640)" fill="#838789" fill-opacity="0.4"/>
<ellipse cx="964" cy="715" rx="5.1" ry="2.2" transform="rotate(18 964 715)" fill="#c6cdcf" fill-opacity="0.4"/>
<ellipse cx="699" cy="626" rx="2.7" ry="1.4" transform="rotate(18 699 626)" fill="#bcc2c5" fill-opacity="0.4"/>
<ellipse cx="763" cy="647" rx="6.3" ry="2.4" transform="rotate(18 763 647)" fill="#838789" fill-opacity="0.4"/>
<ellipse cx="699" cy="636" rx="2.1" ry="1.3" transform="rotate(18 699 636)" fill="#c6cdcf" fill-opacity="0.4"/>
<ellipse cx="799" cy="706" rx="4.2" ry="1.9" transform="rotate(18 799 706)" fill="#838789" fill-opacity="0.4"/>
<ellipse cx="755" cy="645" rx="3.6" ry="2.3" transform="rotate(18 755 645)" fill="#8e9395" fill-opacity="0.4"/>
<ellipse cx="925" cy="697" rx="6.8" ry="1.7" transform="rotate(18 925 697)" fill="#bcc2c5" fill-opacity="0.4"/>
<ellipse cx="965" cy="697" rx="5.4" ry="1.9" transform="rotate(18 965 697)" fill="#c6cdcf" fill-opacity="0.4"/>
<ellipse cx="804" cy="683" rx="2.1" ry="2.3" transform="rotate(18 804 683)" fill="#c6cdcf" fill-opacity="0.4"/>
<ellipse cx="706" cy="637" rx="2.9" ry="2.5" transform="rotate(18 706 637)" fill="#c6cdcf" fill-opacity="0.4"/>
<ellipse cx="767" cy="683" rx="3.7" ry="2.3" transform="rotate(18 767 683)" fill="#838789" fill-opacity="0.4"/>
<ellipse cx="781" cy="693" rx="4.1" ry="2.4" transform="rotate(18 781 693)" fill="#838789" fill-opacity="0.4"/>
<ellipse cx="846" cy="692" rx="3.4" ry="1.4" transform="rotate(18 846 692)" fill="#c6cdcf" fill-opacity="0.4"/>
<ellipse cx="690" cy="660" rx="6.0" ry="1.4" transform="rotate(18 690 660)" fill="#bcc2c5" fill-opacity="0.4"/>
<ellipse cx="719" cy="643" rx="4.8" ry="1.7" transform="rotate(18 719 643)" fill="#8e9395" fill-opacity="0.4"/>
<ellipse cx="918" cy="692" rx="3.8" ry="2.1" transform="rotate(18 918 692)" fill="#bcc2c5" fill-opacity="0.4"/>
<ellipse cx="793" cy="718" rx="3.5" ry="1.7" transform="rotate(18 793 718)" fill="#8e9395" fill-opacity="0.4"/>
<ellipse cx="741" cy="692" rx="6.7" ry="2.5" transform="rotate(18 741 692)" fill="#8e9395" fill-opacity="0.4"/>
<ellipse cx="859" cy="698" rx="4.7" ry="1.6" transform="rotate(18 859 698)" fill="#bcc2c5" fill-opacity="0.4"/>
<ellipse cx="833" cy="670" rx="5.4" ry="1.1" transform="rotate(18 833 670)" fill="#838789" fill-opacity="0.4"/>
<ellipse cx="936" cy="731" rx="2.1" ry="2.1" transform="rotate(18 936 731)" fill="#c6cdcf" fill-opacity="0.4"/>
<ellipse cx="724" cy="634" rx="5.5" ry="2.2" transform="rotate(18 724 634)" fill="#838789" fill-opacity="0.4"/>
<ellipse cx="749" cy="653" rx="2.3" ry="2.4" transform="rotate(18 749 653)" fill="#838789" fill-opacity="0.4"/>
<ellipse cx="922" cy="731" rx="2.3" ry="1.5" transform="rotate(18 922 731)" fill="#8e9395" fill-opacity="0.4"/>
<ellipse cx="748" cy="648" rx="3.4" ry="1.6" transform="rotate(18 748 648)" fill="#c6cdcf" fill-opacity="0.4"/>
<ellipse cx="953" cy="735" rx="6.7" ry="1.3" transform="rotate(18 953 735)" fill="#8e9395" fill-opacity="0.4"/>
<ellipse cx="790" cy="706" rx="6.5" ry="1.0" transform="rotate(18 790 706)" fill="#bcc2c5" fill-opacity="0.4"/>
<ellipse cx="891" cy="705" rx="3.8" ry="1.9" transform="rotate(18 891 705)" fill="#c6cdcf" fill-opacity="0.4"/>
<ellipse cx="734" cy="643" rx="5.6" ry="1.1" transform="rotate(18 734 643)" fill="#8e9395" fill-opacity="0.4"/>
<ellipse cx="692" cy="632" rx="5.8" ry="1.2" transform="rotate(18 692 632)" fill="#8e9395" fill-opacity="0.4"/>
<ellipse cx="901" cy="713" rx="4.8" ry="1.3" transform="rotate(18 901 713)" fill="#8e9395" fill-opacity="0.4"/>
<ellipse cx="829" cy="697" rx="5.4" ry="1.9" transform="rotate(18 829 697)" fill="#c6cdcf" fill-opacity="0.4"/>
<ellipse cx="961" cy="686" rx="6.5" ry="2.3" transform="rotate(18 961 686)" fill="#bcc2c5" fill-opacity="0.4"/>
<ellipse cx="856" cy="716" rx="5.4" ry="1.1" transform="rotate(18 856 716)" fill="#8e9395" fill-opacity="0.4"/>
<ellipse cx="776" cy="700" rx="5.7" ry="1.1" transform="rotate(18 776 700)" fill="#bcc2c5" fill-opacity="0.4"/>
<ellipse cx="888" cy="699" rx="3.4" ry="1.1" transform="rotate(18 888 699)" fill="#8e9395" fill-opacity="0.4"/>
<ellipse cx="964" cy="710" rx="5.5" ry="2.1" transform="rotate(18 964 710)" fill="#bcc2c5" fill-opacity="0.4"/>
<ellipse cx="929" cy="722" rx="4.5" ry="2.0" transform="rotate(18 929 722)" fill="#c6cdcf" fill-opacity="0.4"/>
<ellipse cx="742" cy="681" rx="4.4" ry="1.3" transform="rotate(18 742 681)" fill="#8e9395" fill-opacity="0.4"/>
<ellipse cx="966" cy="740" rx="2.9" ry="1.2" transform="rotate(18 966 740)" fill="#bcc2c5" fill-opacity="0.4"/>
<ellipse cx="914" cy="691" rx="3.2" ry="1.1" transform="rotate(18 914 691)" fill="#bcc2c5" fill-opacity="0.4"/>
<ellipse cx="787" cy="679" rx="5.2" ry="1.2" transform="rotate(18 787 679)" fill="#8e9395" fill-opacity="0.4"/>
<ellipse cx="886" cy="706" rx="3.2" ry="1.4" transform="rotate(18 886 706)" fill="#c6cdcf" fill-opacity="0.4"/>
<ellipse cx="835" cy="693" rx="5.5" ry="1.2" transform="rotate(18 835 693)" fill="#bcc2c5" fill-opacity="0.4"/>
<ellipse cx="892" cy="714" rx="3.7" ry="2.2" transform="rotate(18 892 714)" fill="#8e9395" fill-opacity="0.4"/>
<ellipse cx="844" cy="718" rx="5.4" ry="1.2" transform="rotate(18 844 718)" fill="#8e9395" fill-opacity="0.4"/>
<ellipse cx="974" cy="742" rx="6.2" ry="1.2" transform="rotate(18 974 742)" fill="#c6cdcf" fill-opacity="0.4"/>
<ellipse cx="767" cy="669" rx="2.2" ry="2.3" transform="rotate(18 767 669)" fill="#8e9395" fill-opacity="0.4"/>
<ellipse cx="771" cy="654" rx="4.2" ry="1.2" transform="rotate(18 771 654)" fill="#bcc2c5" fill-opacity="0.4"/>
<ellipse cx="777" cy="680" rx="3.4" ry="1.8" transform="rotate(18 777 680)" fill="#bcc2c5" fill-opacity="0.4"/>
<ellipse cx="694" cy="650" rx="2.4" ry="2.1" transform="rotate(18 694 650)" fill="#c6cdcf" fill-opacity="0.4"/>
<ellipse cx="974" cy="721" rx="5.2" ry="2.4" transform="rotate(18 974 721)" fill="#838789" fill-opacity="0.4"/>
<ellipse cx="827" cy="715" rx="2.0" ry="2.4" transform="rotate(18 827 715)" fill="#bcc2c5" fill-opacity="0.4"/>
<ellipse cx="873" cy="714" rx="5.3" ry="1.1" transform="rotate(18 873 714)" fill="#bcc2c5" fill-opacity="0.4"/>
<ellipse cx="904" cy="674" rx="6.2" ry="1.4" transform="rotate(18 904 674)" fill="#c6cdcf" fill-opacity="0.4"/>
<ellipse cx="736" cy="676" rx="2.5" ry="2.1" transform="rotate(18 736 676)" fill="#8e9395" fill-opacity="0.4"/>
<ellipse cx="773" cy="688" rx="2.9" ry="2.2" transform="rotate(18 773 688)" fill="#c6cdcf" fill-opacity="0.4"/>
<ellipse cx="776" cy="673" rx="6.2" ry="1.4" transform="rotate(18 776 673)" fill="#bcc2c5" fill-opacity="0.4"/>
<ellipse cx="697" cy="631" rx="6.5" ry="2.4" transform="rotate(18 697 631)" fill="#c6cdcf" fill-opacity="0.4"/>
<ellipse cx="828" cy="696" rx="7.0" ry="1.9" transform="rotate(18 828 696)" fill="#8e9395" fill-opacity="0.4"/>
<ellipse cx="868" cy="678" rx="2.8" ry="1.7" transform="rotate(18 868 678)" fill="#8e9395" fill-opacity="0.4"/>
<ellipse cx="971" cy="686" rx="6.3" ry="1.7" transform="rotate(18 971 686)" fill="#838789" fill-opacity="0.4"/>
<ellipse cx="745" cy="663" rx="6.2" ry="2.3" transform="rotate(18 745 663)" fill="#838789" fill-opacity="0.4"/>
<ellipse cx="916" cy="705" rx="2.4" ry="1.1" transform="rotate(18 916 705)" fill="#bcc2c5" fill-opacity="0.4"/>
<ellipse cx="893" cy="737" rx="4.2" ry="2.0" transform="rotate(18 893 737)" fill="#838789" fill-opacity="0.4"/>
<ellipse cx="928" cy="742" rx="3.9" ry="1.0" transform="rotate(18 928 742)" fill="#8e9395" fill-opacity="0.4"/>
<ellipse cx="921" cy="725" rx="4.3" ry="1.8" transform="rotate(18 921 725)" fill="#8e9395" fill-opacity="0.4"/>
<ellipse cx="835" cy="692" rx="6.9" ry="2.4" transform="rotate(18 835 692)" fill="#8e9395" fill-opacity="0.4"/>
<ellipse cx="866" cy="726" rx="5.6" ry="1.5" transform="rotate(18 866 726)" fill="#838789" fill-opacity="0.4"/>
<ellipse cx="878" cy="710" rx="6.8" ry="1.7" transform="rotate(18 878 710)" fill="#c6cdcf" fill-opacity="0.4"/>
<ellipse cx="874" cy="690" rx="4.7" ry="2.0" transform="rotate(18 874 690)" fill="#bcc2c5" fill-opacity="0.4"/>
<ellipse cx="934" cy="692" rx="5.5" ry="1.2" transform="rotate(18 934 692)" fill="#c6cdcf" fill-opacity="0.4"/>
<ellipse cx="854" cy="705" rx="3.8" ry="1.4" transform="rotate(18 854 705)" fill="#c6cdcf" fill-opacity="0.4"/>
<ellipse cx="812" cy="675" rx="2.9" ry="2.3" transform="rotate(18 812 675)" fill="#8e9395" fill-opacity="0.4"/>
<ellipse cx="844" cy="672" rx="5.2" ry="1.3" transform="rotate(18 844 672)" fill="#bcc2c5" fill-opacity="0.4"/>
<ellipse cx="881" cy="721" rx="4.8" ry="1.3" transform="rotate(18 881 721)" fill="#8e9395" fill-opacity="0.4"/>
<ellipse cx="852" cy="673" rx="6.3" ry="2.0" transform="rotate(18 852 673)" fill="#838789" fill-opacity="0.4"/>
<ellipse cx="920" cy="684" rx="5.1" ry="2.4" transform="rotate(18 920 684)" fill="#838789" fill-opacity="0.4"/>
<ellipse cx="835" cy="694" rx="4.7" ry="2.5" transform="rotate(18 835 694)" fill="#c6cdcf" fill-opacity="0.4"/>
<ellipse cx="737" cy="667" rx="2.7" ry="2.2" transform="rotate(18 737 667)" fill="#838789" fill-opacity="0.4"/>
<ellipse cx="697" cy="638" rx="2.2" ry="2.1" transform="rotate(18 697 638)" fill="#bcc2c5" fill-opacity="0.4"/>
<ellipse cx="967" cy="713" rx="5.5" ry="1.6" transform="rotate(18 967 713)" fill="#838789" fill-opacity="0.4"/>
<ellipse cx="947" cy="723" rx="4.8" ry="2.4" transform="rotate(18 947 723)" fill="#8e9395" fill-opacity="0.4"/>
<ellipse cx="941" cy="689" rx="6.0" ry="2.1" transform="rotate(18 941 689)" fill="#bcc2c5" fill-opacity="0.4"/>
<ellipse cx="683" cy="635" rx="3.9" ry="2.1" transform="rotate(18 683 635)" fill="#8e9395" fill-opacity="0.4"/>
<ellipse cx="964" cy="732" rx="6.1" ry="1.5" transform="rotate(18 964 732)" fill="#838789" fill-opacity="0.4"/>
<ellipse cx="787" cy="673" rx="2.2" ry="2.4" transform="rotate(18 787 673)" fill="#838789" fill-opacity="0.4"/>
<ellipse cx="753" cy="664" rx="2.1" ry="2.5" transform="rotate(18 753 664)" fill="#c6cdcf" fill-opacity="0.4"/>
<ellipse cx="812" cy="712" rx="2.6" ry="2.2" transform="rotate(18 812 712)" fill="#c6cdcf" fill-opacity="0.4"/>
<ellipse cx="736" cy="671" rx="6.4" ry="2.0" transform="rotate(18 736 671)" fill="#bcc2c5" fill-opacity="0.4"/>
<ellipse cx="931" cy="719" rx="4.7" ry="2.0" transform="rotate(18 931 719)" fill="#bcc2c5" fill-opacity="0.4"/>
<ellipse cx="922" cy="745" rx="2.1" ry="2.5" transform="rotate(18 922 745)" fill="#838789" fill-opacity="0.4"/>
<ellipse cx="826" cy="694" rx="6.0" ry="1.1" transform="rotate(18 826 694)" fill="#838789" fill-opacity="0.4"/>
<ellipse cx="735" cy="687" rx="6.2" ry="2.5" transform="rotate(18 735 687)" fill="#c6cdcf" fill-opacity="0.4"/>
<ellipse cx="888" cy="703" rx="6.4" ry="1.9" transform="rotate(18 888 703)" fill="#8e9395" fill-opacity="0.4"/>
<ellipse cx="703" cy="646" rx="3.6" ry="1.2" transform="rotate(18 703 646)" fill="#8e9395" fill-opacity="0.4"/>
<ellipse cx="867" cy="683" rx="5.6" ry="1.5" transform="rotate(18 867 683)" fill="#bcc2c5" fill-opacity="0.4"/>
<ellipse cx="821" cy="724" rx="2.0" ry="1.9" transform="rotate(18 821 724)" fill="#bcc2c5" fill-opacity="0.4"/>
</g>
<g filter="url(#jblur2)">
<circle cx="901.0" cy="535.0" r="2.4" fill="#e8e8e8" fill-opacity="0.75"/>
<circle cx="964.0" cy="542.0" r="2.2" fill="#d8dce0" fill-opacity="0.65"/>
<circle cx="848.0" cy="453.0" r="3.0" fill="#b8b4a8" fill-opacity="0.35"/>
<circle cx="817.0" cy="615.0" r="5.0" fill="#ccd6de" fill-opacity="0.30"/>
<circle cx="790.0" cy="607.0" r="3.0" fill="#c8d0d8" fill-opacity="0.25"/>
</g>
<rect x="670" y="380" width="320" height="300" fill="url(#jphase)"/>
<rect x="670" y="380" width="320" height="300" fill="url(#jshade)"/>
</g></g>
<circle cx="979.5" cy="538.7" r="2.6" fill="#b09a4c"/>
<circle cx="1052.5" cy="526" r="16" fill="url(#eurGlow)"/>
</g><!--/jup-->

<!-- labels -->
<text x="940" y="419" font-size="14" fill="#8491bd" textLength="46" lengthAdjust="spacingAndGlyphs">Jupiter</text>
<text x="988" y="529" font-size="14" fill="#8491bd" textLength="35" lengthAdjust="spacingAndGlyphs">Io (JI)</text>
<text x="1061" y="516" font-size="14" fill="#8491bd" textLength="76" lengthAdjust="spacingAndGlyphs">Europa (JII)</text>

<!-- ===== toolbar top-right ===== -->
<path d="M1394.5,25 V66.5 Q1394.5,73.5 1401.5,73.5 H1673.5 V25" fill="#0a0a0c" stroke="#5f5f5f" stroke-width="1"/>
<rect x="1428" y="33" width="32" height="32" fill="#959595"/>
<circle cx="1444" cy="49" r="12" fill="#0a0a0c"/>
<rect x="1492" y="43" width="24" height="12" rx="1" fill="none" stroke="#5e5e5e" stroke-width="1.8"/>
<circle cx="1564" cy="49" r="12.4" fill="none" stroke="#707070" stroke-width="1.2" stroke-dasharray="4.5 0.4"/>
<circle cx="1564" cy="49" r="6.4" fill="none" stroke="#787878" stroke-width="1.7"/>
<circle cx="1564" cy="49" r="1.8" fill="#7a7a7a"/>
<rect x="1608" y="33" width="32" height="32" fill="#959595"/>
<circle cx="1624" cy="49" r="12" fill="#0a0a0c"/>
<g fill="#959595">
  <rect x="1613.5" y="48.2" width="16" height="2.8" rx="1.4"/>
  <circle cx="1631.3" cy="49.6" r="3.7"/>
  <path d="M1636,47.6 L1632.6,48.6 V50.6 L1636,51.6 Z" fill="#0a0a0c"/>
</g>

<!-- ===== Date and Time dialog ===== -->
<g id="dialog">
  <rect x="803" y="794" width="567" height="25" fill="url(#dlgTitle)"/>
  <rect x="803" y="819" width="567" height="44" fill="#0b0b0c"/>
  <path d="M803,863 V827 Q803,819 811,819 H1079 Q1087,819 1087,827 V863 Z" fill="#222223"/>
  <text x="1031" y="811" font-size="14" font-weight="bold" fill="#60605e" textLength="114" lengthAdjust="spacingAndGlyphs">Date and Time</text>
  <path d="M1353,801 L1363,811 M1363,801 L1353,811" stroke="#4c4c4c" stroke-width="2.3"/>
  <text x="888" y="846" font-size="14" font-weight="bold" fill="#6b6b69" textLength="114" lengthAdjust="spacingAndGlyphs">Date and Time</text>
  <text x="1189" y="846" font-size="14" font-weight="bold" fill="#555553" textLength="78" lengthAdjust="spacingAndGlyphs">Julian Day</text>
  <rect x="803" y="863" width="290" height="58" fill="url(#spin)"/>
  <rect x="1093" y="863" width="5" height="58" fill="#1f2022"/>
  <rect x="1098" y="863" width="272" height="58" fill="url(#spin)"/>
  <rect x="1220" y="881" width="23" height="22" fill="#6e5c3a"/>
  <g font-size="19" fill="#141414">
    <text x="845" y="898" textLength="45" lengthAdjust="spacingAndGlyphs">2024</text>
    <text x="974" y="898" textLength="10" lengthAdjust="spacingAndGlyphs">1</text>
    <text x="1046" y="898" textLength="22" lengthAdjust="spacingAndGlyphs">22</text>
    <text x="1128" y="898" textLength="21" lengthAdjust="spacingAndGlyphs">15</text>
    <text x="1220" y="898" textLength="22" lengthAdjust="spacingAndGlyphs">21</text>
    <text x="1313" y="898" textLength="22" lengthAdjust="spacingAndGlyphs">43</text>
  </g>
  <g fill="#141414">
    <rect x="935" y="893" width="10" height="2"/>
    <rect x="1014" y="893" width="10" height="2"/>
    <rect x="1184" y="887" width="3" height="3"/>
    <rect x="1184" y="898" width="3" height="3"/>
    <rect x="1277" y="887" width="3" height="3"/>
    <rect x="1277" y="898" width="3" height="3"/>
  </g>
  <g fill="#48494c">
    <path d="M865,872 h10 l-5,-5z"/><path d="M865,912 h10 l-5,5z"/>
    <path d="M974,872 h10 l-5,-5z"/><path d="M974,912 h10 l-5,5z"/>
    <path d="M1053,872 h10 l-5,-5z"/><path d="M1053,912 h10 l-5,5z"/>
    <path d="M1134,872 h10 l-5,-5z"/><path d="M1134,912 h10 l-5,5z"/>
    <path d="M1227,872 h10 l-5,-5z"/><path d="M1227,912 h10 l-5,5z"/>
    <path d="M1320,872 h10 l-5,-5z"/><path d="M1320,912 h10 l-5,5z"/>
  </g>
</g>

<!-- ===== bottom bar ===== -->
<path d="M7,1023.5 H810.5 Q813.5,1023.5 813.5,1026.5 V1047 H7 Z" fill="#0c0c0c"/>
<path d="M7,1023.5 H810.5 Q813.5,1023.5 813.5,1026.5 V1047" fill="none" stroke="#696969" stroke-width="1"/>
<g font-size="14" fill="#e6e6e6">
  <text x="69" y="1042" textLength="423" lengthAdjust="spacingAndGlyphs">Earth, Rochester Institute of Technology Observatory, 178 m</text>
  <text x="382" y="1042" textLength="88" lengthAdjust="spacingAndGlyphs">FOV 0.0383°</text>
  <text x="496" y="1042" textLength="59" lengthAdjust="spacingAndGlyphs">18.2 FPS</text>
  <text x="575" y="1042" textLength="225" lengthAdjust="spacingAndGlyphs">2024-01-22 15:21:43 UTC-05:00</text>
</g>
</svg>
</body></html>
